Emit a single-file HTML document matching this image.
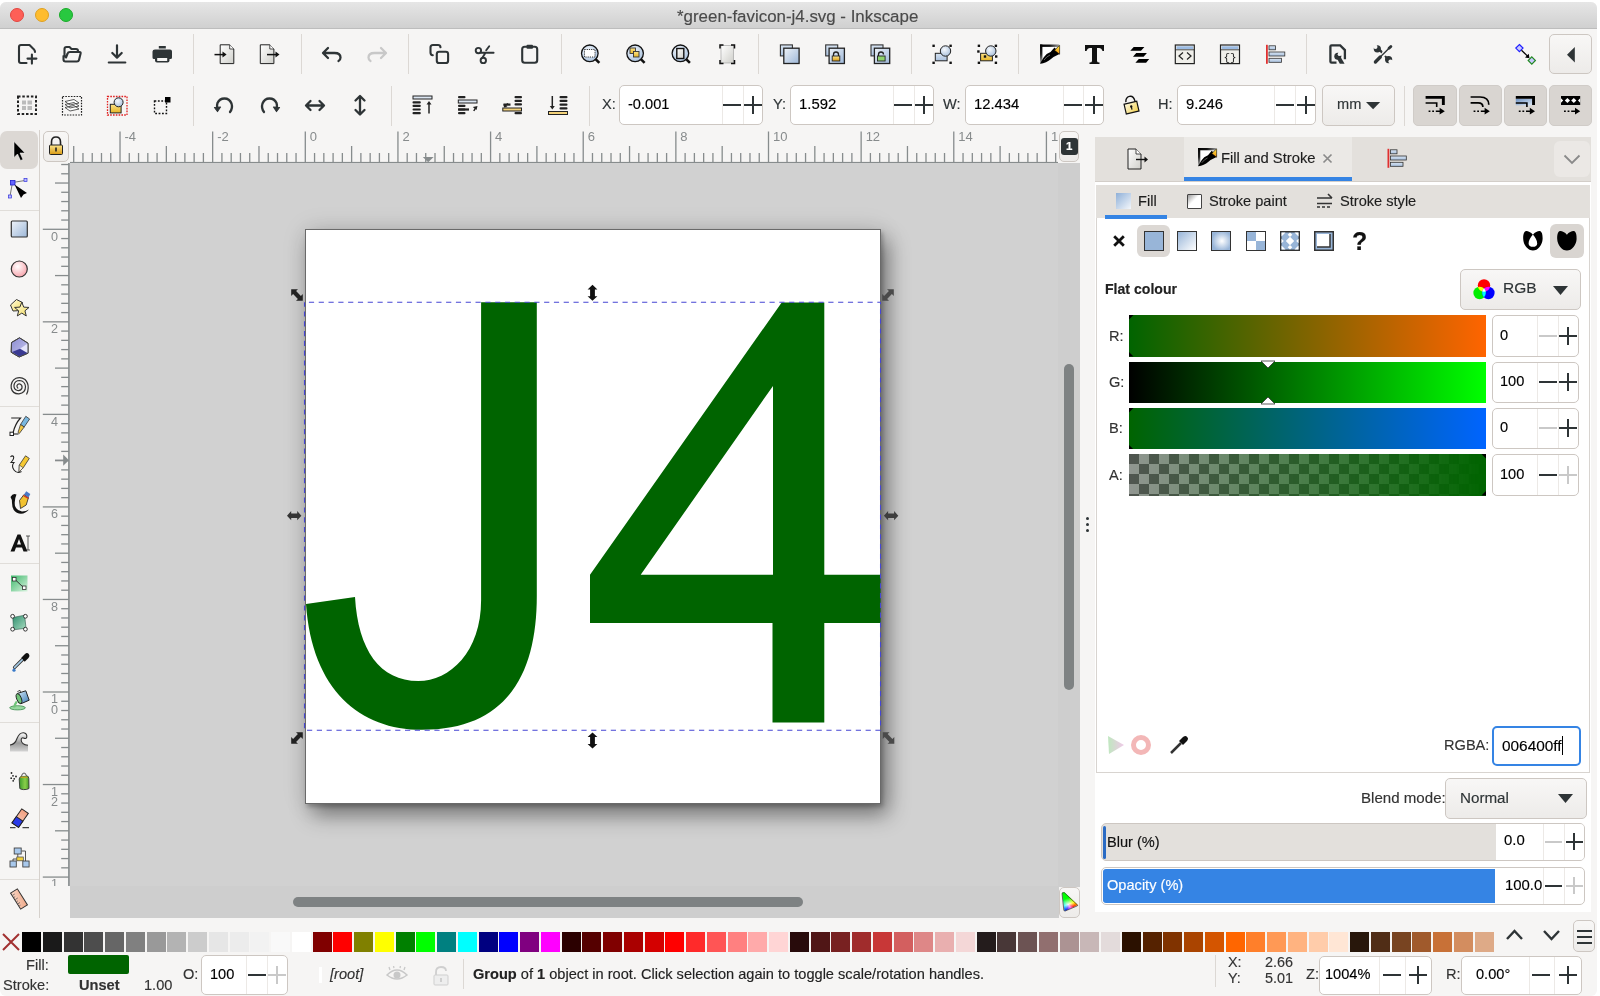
<!DOCTYPE html><html><head><meta charset="utf-8"><style>
html,body{margin:0;padding:0;width:1600px;height:996px;overflow:hidden;background:#fff;font-family:"Liberation Sans",sans-serif;}
.t{will-change:transform;-webkit-text-stroke:0.15px}
#win{position:absolute;left:0;top:2px;width:1597px;height:994px;background:#f6f5f4;overflow:hidden;border-radius:6px;}
</style></head><body>
<div id="win"></div>
<div style="position:absolute;left:0px;top:2px;width:1597px;height:26.6px;background:linear-gradient(#e6e6e6,#d0d0d0);border-bottom:1.2px solid #bdbdbd;box-sizing:border-box;border-radius:6px 6px 0 0"></div>
<div style="position:absolute;left:10px;top:8px;width:14px;height:14px;background:#fe5f57;border-radius:50%;box-sizing:border-box;border:0.5px solid #e24640"></div>
<div style="position:absolute;left:34.5px;top:8px;width:14px;height:14px;background:#febc2e;border-radius:50%;box-sizing:border-box;border:0.5px solid #dea123"></div>
<div style="position:absolute;left:59px;top:8px;width:14px;height:14px;background:#28c840;border-radius:50%;box-sizing:border-box;border:0.5px solid #1aab29"></div>
<div class="t" style="position:absolute;left:676.5px;top:8.6px;font-size:16.9px;line-height:1;color:#4a4a4a;font-weight:400;white-space:pre;">*green-favicon-j4.svg - Inkscape</div>
<div style="position:absolute;left:193px;top:34px;width:1px;height:40px;background:#dcd8d4"></div>
<div style="position:absolute;left:300.5px;top:34px;width:1px;height:40px;background:#dcd8d4"></div>
<div style="position:absolute;left:408px;top:34px;width:1px;height:40px;background:#dcd8d4"></div>
<div style="position:absolute;left:560.5px;top:34px;width:1px;height:40px;background:#dcd8d4"></div>
<div style="position:absolute;left:758.2px;top:34px;width:1px;height:40px;background:#dcd8d4"></div>
<div style="position:absolute;left:910.9px;top:34px;width:1px;height:40px;background:#dcd8d4"></div>
<div style="position:absolute;left:1018.4px;top:34px;width:1px;height:40px;background:#dcd8d4"></div>
<div style="position:absolute;left:1306px;top:34px;width:1px;height:40px;background:#dcd8d4"></div>
<div style="position:absolute;left:193px;top:86px;width:1px;height:40px;background:#dcd8d4"></div>
<div style="position:absolute;left:391px;top:86px;width:1px;height:40px;background:#dcd8d4"></div>
<div style="position:absolute;left:588.5px;top:86px;width:1px;height:40px;background:#dcd8d4"></div>
<div style="position:absolute;left:1403.8px;top:86px;width:1px;height:40px;background:#dcd8d4"></div>
<div style="position:absolute;left:619.4px;top:85.2px;width:143.7px;height:39.7px;background:#fff;border:1px solid #cdc7c2;border-radius:5px;box-sizing:border-box"></div>
<div style="position:absolute;left:721.9px;top:86.2px;width:1px;height:37.7px;background:#ece9e6"></div>
<div style="position:absolute;left:742.8px;top:86.2px;width:1px;height:37.7px;background:#ece9e6"></div>
<div class="t" style="position:absolute;left:627.5px;top:96.89110000000001px;font-size:14.6px;line-height:1;color:#000;font-weight:400;white-space:pre;">-0.001</div>
<div style="position:absolute;left:723.3499999999999px;top:104.05000000000001px;width:18px;height:2px;background:#2e3436"></div>
<div style="position:absolute;left:743.9499999999999px;top:104.05000000000001px;width:18px;height:2px;background:#2e3436"></div>
<div style="position:absolute;left:751.9499999999999px;top:96.05000000000001px;width:2px;height:18px;background:#2e3436"></div>
<div style="position:absolute;left:790.3px;top:85.2px;width:143.7px;height:39.7px;background:#fff;border:1px solid #cdc7c2;border-radius:5px;box-sizing:border-box"></div>
<div style="position:absolute;left:892.8px;top:86.2px;width:1px;height:37.7px;background:#ece9e6"></div>
<div style="position:absolute;left:913.75px;top:86.2px;width:1px;height:37.7px;background:#ece9e6"></div>
<div class="t" style="position:absolute;left:798.8px;top:96.63715000000002px;font-size:14.9px;line-height:1;color:#000;font-weight:400;white-space:pre;">1.592</div>
<div style="position:absolute;left:894.275px;top:104.05000000000001px;width:18px;height:2px;background:#2e3436"></div>
<div style="position:absolute;left:914.875px;top:104.05000000000001px;width:18px;height:2px;background:#2e3436"></div>
<div style="position:absolute;left:922.875px;top:96.05000000000001px;width:2px;height:18px;background:#2e3436"></div>
<div style="position:absolute;left:965px;top:85.2px;width:139px;height:39.7px;background:#fff;border:1px solid #cdc7c2;border-radius:5px;box-sizing:border-box"></div>
<div style="position:absolute;left:1062.5px;top:86.2px;width:1px;height:37.7px;background:#ece9e6"></div>
<div style="position:absolute;left:1083px;top:86.2px;width:1px;height:37.7px;background:#ece9e6"></div>
<div class="t" style="position:absolute;left:973.5px;top:96.72180000000002px;font-size:14.8px;line-height:1;color:#000;font-weight:400;white-space:pre;">12.434</div>
<div style="position:absolute;left:1063.75px;top:104.05000000000001px;width:18px;height:2px;background:#2e3436"></div>
<div style="position:absolute;left:1084.5px;top:104.05000000000001px;width:18px;height:2px;background:#2e3436"></div>
<div style="position:absolute;left:1092.5px;top:96.05000000000001px;width:2px;height:18px;background:#2e3436"></div>
<div style="position:absolute;left:1176.7px;top:85.2px;width:139.3px;height:39.7px;background:#fff;border:1px solid #cdc7c2;border-radius:5px;box-sizing:border-box"></div>
<div style="position:absolute;left:1274.4px;top:86.2px;width:1px;height:37.7px;background:#ece9e6"></div>
<div style="position:absolute;left:1295.3px;top:86.2px;width:1px;height:37.7px;background:#ece9e6"></div>
<div class="t" style="position:absolute;left:1186px;top:96.72180000000002px;font-size:14.8px;line-height:1;color:#000;font-weight:400;white-space:pre;">9.246</div>
<div style="position:absolute;left:1275.85px;top:104.05000000000001px;width:18px;height:2px;background:#2e3436"></div>
<div style="position:absolute;left:1296.65px;top:104.05000000000001px;width:18px;height:2px;background:#2e3436"></div>
<div style="position:absolute;left:1304.65px;top:96.05000000000001px;width:2px;height:18px;background:#2e3436"></div>
<div class="t" style="position:absolute;left:602px;top:97px;font-size:14.6px;line-height:1;color:#2e3436;font-weight:400;white-space:pre;">X:</div>
<div class="t" style="position:absolute;left:772.5px;top:97px;font-size:14.6px;line-height:1;color:#2e3436;font-weight:400;white-space:pre;">Y:</div>
<div class="t" style="position:absolute;left:943px;top:97px;font-size:14.6px;line-height:1;color:#2e3436;font-weight:400;white-space:pre;">W:</div>
<div class="t" style="position:absolute;left:1158px;top:97px;font-size:14.6px;line-height:1;color:#2e3436;font-weight:400;white-space:pre;">H:</div>
<div style="position:absolute;left:1322.3px;top:85px;width:72.5px;height:40.6px;background:linear-gradient(#f8f7f6,#edebe9);border:1px solid #cdc7c2;border-radius:5px;box-sizing:border-box"></div>
<div class="t" style="position:absolute;left:1336.5px;top:97.2px;font-size:14.6px;line-height:1;color:#2e3436;font-weight:400;white-space:pre;">mm</div>
<svg style="position:absolute;left:1365.8px;top:101.8px" width="15" height="10" viewBox="0 0 15 10"><path d="M0 0H14.2L7.1 7.3Z" fill="#2e3436"/></svg>
<div style="position:absolute;left:1413.25px;top:85px;width:43.5px;height:40.5px;background:#d9d5d1;border:1px solid #d0ccc8;border-radius:5px;box-sizing:border-box"></div>
<div style="position:absolute;left:1458.75px;top:85px;width:43.0px;height:40.5px;background:#d9d5d1;border:1px solid #d0ccc8;border-radius:5px;box-sizing:border-box"></div>
<div style="position:absolute;left:1504.25px;top:85px;width:42.5px;height:40.5px;background:#d9d5d1;border:1px solid #d0ccc8;border-radius:5px;box-sizing:border-box"></div>
<div style="position:absolute;left:1549.25px;top:85px;width:42.75px;height:40.5px;background:#d9d5d1;border:1px solid #d0ccc8;border-radius:5px;box-sizing:border-box"></div>
<div style="position:absolute;left:1549.25px;top:33.75px;width:42.5px;height:40.5px;background:linear-gradient(#f8f7f6,#edebe9);border:1px solid #cdc7c2;border-radius:5px;box-sizing:border-box"></div>
<svg style="position:absolute;left:1567px;top:46.5px" width="9" height="16" viewBox="0 0 9 16"><path d="M7.8 0V15.5L0 7.75Z" fill="#2e3436"/></svg>
<div style="position:absolute;left:39px;top:130px;width:1px;height:788px;background:#d6d1cc"></div>
<div style="position:absolute;left:0px;top:131px;width:38.2px;height:38.2px;background:#dcd8d4;border-radius:7px"></div>
<div style="position:absolute;left:0px;top:209.8px;width:39px;height:1px;background:#e0ddd9"></div>
<div style="position:absolute;left:0px;top:406px;width:39px;height:1px;background:#e0ddd9"></div>
<div style="position:absolute;left:0px;top:563.4px;width:39px;height:1px;background:#e0ddd9"></div>
<div style="position:absolute;left:0px;top:721.6px;width:39px;height:1px;background:#e0ddd9"></div>
<div style="position:absolute;left:0px;top:878.5px;width:39px;height:1px;background:#e0ddd9"></div>
<div style="position:absolute;left:70px;top:130px;width:988px;height:32px;background:#f6f5f4"></div>
<div style="position:absolute;left:70px;top:163px;width:1010px;height:723px;background:#d1d1d1"></div>
<div style="position:absolute;left:70px;top:886px;width:1010px;height:32px;background:#cecece"></div>
<div style="position:absolute;left:1058px;top:163px;width:22px;height:723px;background:#cecece"></div>
<div style="position:absolute;left:1059px;top:887px;width:21px;height:31px;background:#f6f5f4"></div>
<svg style="position:absolute;left:70px;top:130px;will-change:transform" width="988" height="33" viewBox="0 0 988 33"><rect x="0" y="31.9" width="988" height="1.2" fill="#878c8d"/><rect x="3.05" y="16" width="1.3" height="16.5" fill="#878c8d"/><rect x="12.31" y="23" width="1.3" height="9.5" fill="#878c8d"/><rect x="21.58" y="23" width="1.3" height="9.5" fill="#878c8d"/><rect x="30.84" y="23" width="1.3" height="9.5" fill="#878c8d"/><rect x="40.11" y="23" width="1.3" height="9.5" fill="#878c8d"/><rect x="49.37" y="1.5" width="1.3" height="31.0" fill="#878c8d"/><text x="54.52" y="11.1" font-size="13" fill="#878b8c" font-family="Liberation Sans">-4</text><rect x="58.63" y="23" width="1.3" height="9.5" fill="#878c8d"/><rect x="67.90" y="23" width="1.3" height="9.5" fill="#878c8d"/><rect x="77.16" y="23" width="1.3" height="9.5" fill="#878c8d"/><rect x="86.43" y="23" width="1.3" height="9.5" fill="#878c8d"/><rect x="95.69" y="16" width="1.3" height="16.5" fill="#878c8d"/><rect x="104.95" y="23" width="1.3" height="9.5" fill="#878c8d"/><rect x="114.22" y="23" width="1.3" height="9.5" fill="#878c8d"/><rect x="123.48" y="23" width="1.3" height="9.5" fill="#878c8d"/><rect x="132.75" y="23" width="1.3" height="9.5" fill="#878c8d"/><rect x="142.01" y="1.5" width="1.3" height="31.0" fill="#878c8d"/><text x="147.16" y="11.1" font-size="13" fill="#878b8c" font-family="Liberation Sans">-2</text><rect x="151.27" y="23" width="1.3" height="9.5" fill="#878c8d"/><rect x="160.54" y="23" width="1.3" height="9.5" fill="#878c8d"/><rect x="169.80" y="23" width="1.3" height="9.5" fill="#878c8d"/><rect x="179.07" y="23" width="1.3" height="9.5" fill="#878c8d"/><rect x="188.33" y="16" width="1.3" height="16.5" fill="#878c8d"/><rect x="197.59" y="23" width="1.3" height="9.5" fill="#878c8d"/><rect x="206.86" y="23" width="1.3" height="9.5" fill="#878c8d"/><rect x="216.12" y="23" width="1.3" height="9.5" fill="#878c8d"/><rect x="225.39" y="23" width="1.3" height="9.5" fill="#878c8d"/><rect x="234.65" y="1.5" width="1.3" height="31.0" fill="#878c8d"/><text x="239.80" y="11.1" font-size="13" fill="#878b8c" font-family="Liberation Sans">0</text><rect x="243.91" y="23" width="1.3" height="9.5" fill="#878c8d"/><rect x="253.18" y="23" width="1.3" height="9.5" fill="#878c8d"/><rect x="262.44" y="23" width="1.3" height="9.5" fill="#878c8d"/><rect x="271.71" y="23" width="1.3" height="9.5" fill="#878c8d"/><rect x="280.97" y="16" width="1.3" height="16.5" fill="#878c8d"/><rect x="290.23" y="23" width="1.3" height="9.5" fill="#878c8d"/><rect x="299.50" y="23" width="1.3" height="9.5" fill="#878c8d"/><rect x="308.76" y="23" width="1.3" height="9.5" fill="#878c8d"/><rect x="318.03" y="23" width="1.3" height="9.5" fill="#878c8d"/><rect x="327.29" y="1.5" width="1.3" height="31.0" fill="#878c8d"/><text x="332.44" y="11.1" font-size="13" fill="#878b8c" font-family="Liberation Sans">2</text><rect x="336.55" y="23" width="1.3" height="9.5" fill="#878c8d"/><rect x="345.82" y="23" width="1.3" height="9.5" fill="#878c8d"/><rect x="355.08" y="23" width="1.3" height="9.5" fill="#878c8d"/><rect x="364.35" y="23" width="1.3" height="9.5" fill="#878c8d"/><rect x="373.61" y="16" width="1.3" height="16.5" fill="#878c8d"/><rect x="382.87" y="23" width="1.3" height="9.5" fill="#878c8d"/><rect x="392.14" y="23" width="1.3" height="9.5" fill="#878c8d"/><rect x="401.40" y="23" width="1.3" height="9.5" fill="#878c8d"/><rect x="410.67" y="23" width="1.3" height="9.5" fill="#878c8d"/><rect x="419.93" y="1.5" width="1.3" height="31.0" fill="#878c8d"/><text x="425.08" y="11.1" font-size="13" fill="#878b8c" font-family="Liberation Sans">4</text><rect x="429.19" y="23" width="1.3" height="9.5" fill="#878c8d"/><rect x="438.46" y="23" width="1.3" height="9.5" fill="#878c8d"/><rect x="447.72" y="23" width="1.3" height="9.5" fill="#878c8d"/><rect x="456.99" y="23" width="1.3" height="9.5" fill="#878c8d"/><rect x="466.25" y="16" width="1.3" height="16.5" fill="#878c8d"/><rect x="475.51" y="23" width="1.3" height="9.5" fill="#878c8d"/><rect x="484.78" y="23" width="1.3" height="9.5" fill="#878c8d"/><rect x="494.04" y="23" width="1.3" height="9.5" fill="#878c8d"/><rect x="503.31" y="23" width="1.3" height="9.5" fill="#878c8d"/><rect x="512.57" y="1.5" width="1.3" height="31.0" fill="#878c8d"/><text x="517.72" y="11.1" font-size="13" fill="#878b8c" font-family="Liberation Sans">6</text><rect x="521.83" y="23" width="1.3" height="9.5" fill="#878c8d"/><rect x="531.10" y="23" width="1.3" height="9.5" fill="#878c8d"/><rect x="540.36" y="23" width="1.3" height="9.5" fill="#878c8d"/><rect x="549.63" y="23" width="1.3" height="9.5" fill="#878c8d"/><rect x="558.89" y="16" width="1.3" height="16.5" fill="#878c8d"/><rect x="568.15" y="23" width="1.3" height="9.5" fill="#878c8d"/><rect x="577.42" y="23" width="1.3" height="9.5" fill="#878c8d"/><rect x="586.68" y="23" width="1.3" height="9.5" fill="#878c8d"/><rect x="595.95" y="23" width="1.3" height="9.5" fill="#878c8d"/><rect x="605.21" y="1.5" width="1.3" height="31.0" fill="#878c8d"/><text x="610.36" y="11.1" font-size="13" fill="#878b8c" font-family="Liberation Sans">8</text><rect x="614.47" y="23" width="1.3" height="9.5" fill="#878c8d"/><rect x="623.74" y="23" width="1.3" height="9.5" fill="#878c8d"/><rect x="633.00" y="23" width="1.3" height="9.5" fill="#878c8d"/><rect x="642.27" y="23" width="1.3" height="9.5" fill="#878c8d"/><rect x="651.53" y="16" width="1.3" height="16.5" fill="#878c8d"/><rect x="660.79" y="23" width="1.3" height="9.5" fill="#878c8d"/><rect x="670.06" y="23" width="1.3" height="9.5" fill="#878c8d"/><rect x="679.32" y="23" width="1.3" height="9.5" fill="#878c8d"/><rect x="688.59" y="23" width="1.3" height="9.5" fill="#878c8d"/><rect x="697.85" y="1.5" width="1.3" height="31.0" fill="#878c8d"/><text x="703.00" y="11.1" font-size="13" fill="#878b8c" font-family="Liberation Sans">10</text><rect x="707.11" y="23" width="1.3" height="9.5" fill="#878c8d"/><rect x="716.38" y="23" width="1.3" height="9.5" fill="#878c8d"/><rect x="725.64" y="23" width="1.3" height="9.5" fill="#878c8d"/><rect x="734.91" y="23" width="1.3" height="9.5" fill="#878c8d"/><rect x="744.17" y="16" width="1.3" height="16.5" fill="#878c8d"/><rect x="753.43" y="23" width="1.3" height="9.5" fill="#878c8d"/><rect x="762.70" y="23" width="1.3" height="9.5" fill="#878c8d"/><rect x="771.96" y="23" width="1.3" height="9.5" fill="#878c8d"/><rect x="781.23" y="23" width="1.3" height="9.5" fill="#878c8d"/><rect x="790.49" y="1.5" width="1.3" height="31.0" fill="#878c8d"/><text x="795.64" y="11.1" font-size="13" fill="#878b8c" font-family="Liberation Sans">12</text><rect x="799.75" y="23" width="1.3" height="9.5" fill="#878c8d"/><rect x="809.02" y="23" width="1.3" height="9.5" fill="#878c8d"/><rect x="818.28" y="23" width="1.3" height="9.5" fill="#878c8d"/><rect x="827.55" y="23" width="1.3" height="9.5" fill="#878c8d"/><rect x="836.81" y="16" width="1.3" height="16.5" fill="#878c8d"/><rect x="846.07" y="23" width="1.3" height="9.5" fill="#878c8d"/><rect x="855.34" y="23" width="1.3" height="9.5" fill="#878c8d"/><rect x="864.60" y="23" width="1.3" height="9.5" fill="#878c8d"/><rect x="873.87" y="23" width="1.3" height="9.5" fill="#878c8d"/><rect x="883.13" y="1.5" width="1.3" height="31.0" fill="#878c8d"/><text x="888.28" y="11.1" font-size="13" fill="#878b8c" font-family="Liberation Sans">14</text><rect x="892.39" y="23" width="1.3" height="9.5" fill="#878c8d"/><rect x="901.66" y="23" width="1.3" height="9.5" fill="#878c8d"/><rect x="910.92" y="23" width="1.3" height="9.5" fill="#878c8d"/><rect x="920.19" y="23" width="1.3" height="9.5" fill="#878c8d"/><rect x="929.45" y="16" width="1.3" height="16.5" fill="#878c8d"/><rect x="938.71" y="23" width="1.3" height="9.5" fill="#878c8d"/><rect x="947.98" y="23" width="1.3" height="9.5" fill="#878c8d"/><rect x="957.24" y="23" width="1.3" height="9.5" fill="#878c8d"/><rect x="966.51" y="23" width="1.3" height="9.5" fill="#878c8d"/><rect x="975.77" y="1.5" width="1.3" height="31.0" fill="#878c8d"/><text x="980.92" y="11.1" font-size="13" fill="#878b8c" font-family="Liberation Sans">16</text><rect x="985.03" y="23" width="1.3" height="9.5" fill="#878c8d"/></svg>
<svg style="position:absolute;left:40px;top:163px;will-change:transform" width="30" height="723" viewBox="0 0 30 723"><rect x="28.1" y="0" width="1.7" height="723" fill="#878c8d"/><rect x="21.2" y="0.87" width="7.800000000000001" height="1.3" fill="#878c8d"/><rect x="21.2" y="10.13" width="7.800000000000001" height="1.3" fill="#878c8d"/><rect x="15" y="19.38" width="14" height="1.3" fill="#878c8d"/><rect x="21.2" y="28.63" width="7.800000000000001" height="1.3" fill="#878c8d"/><rect x="21.2" y="37.89" width="7.800000000000001" height="1.3" fill="#878c8d"/><rect x="21.2" y="47.14" width="7.800000000000001" height="1.3" fill="#878c8d"/><rect x="21.2" y="56.40" width="7.800000000000001" height="1.3" fill="#878c8d"/><rect x="2.8" y="65.65" width="26.2" height="1.3" fill="#878c8d"/><text x="14.6" y="77.60" font-size="12.6" fill="#878b8c" font-family="Liberation Sans" text-anchor="middle">0</text><rect x="21.2" y="74.90" width="7.800000000000001" height="1.3" fill="#878c8d"/><rect x="21.2" y="84.16" width="7.800000000000001" height="1.3" fill="#878c8d"/><rect x="21.2" y="93.41" width="7.800000000000001" height="1.3" fill="#878c8d"/><rect x="21.2" y="102.67" width="7.800000000000001" height="1.3" fill="#878c8d"/><rect x="15" y="111.92" width="14" height="1.3" fill="#878c8d"/><rect x="21.2" y="121.17" width="7.800000000000001" height="1.3" fill="#878c8d"/><rect x="21.2" y="130.43" width="7.800000000000001" height="1.3" fill="#878c8d"/><rect x="21.2" y="139.68" width="7.800000000000001" height="1.3" fill="#878c8d"/><rect x="21.2" y="148.94" width="7.800000000000001" height="1.3" fill="#878c8d"/><rect x="2.8" y="158.19" width="26.2" height="1.3" fill="#878c8d"/><text x="14.6" y="170.14" font-size="12.6" fill="#878b8c" font-family="Liberation Sans" text-anchor="middle">2</text><rect x="21.2" y="167.44" width="7.800000000000001" height="1.3" fill="#878c8d"/><rect x="21.2" y="176.70" width="7.800000000000001" height="1.3" fill="#878c8d"/><rect x="21.2" y="185.95" width="7.800000000000001" height="1.3" fill="#878c8d"/><rect x="21.2" y="195.21" width="7.800000000000001" height="1.3" fill="#878c8d"/><rect x="15" y="204.46" width="14" height="1.3" fill="#878c8d"/><rect x="21.2" y="213.71" width="7.800000000000001" height="1.3" fill="#878c8d"/><rect x="21.2" y="222.97" width="7.800000000000001" height="1.3" fill="#878c8d"/><rect x="21.2" y="232.22" width="7.800000000000001" height="1.3" fill="#878c8d"/><rect x="21.2" y="241.48" width="7.800000000000001" height="1.3" fill="#878c8d"/><rect x="2.8" y="250.73" width="26.2" height="1.3" fill="#878c8d"/><text x="14.6" y="262.68" font-size="12.6" fill="#878b8c" font-family="Liberation Sans" text-anchor="middle">4</text><rect x="21.2" y="259.98" width="7.800000000000001" height="1.3" fill="#878c8d"/><rect x="21.2" y="269.24" width="7.800000000000001" height="1.3" fill="#878c8d"/><rect x="21.2" y="278.49" width="7.800000000000001" height="1.3" fill="#878c8d"/><rect x="21.2" y="287.75" width="7.800000000000001" height="1.3" fill="#878c8d"/><rect x="15" y="297.00" width="14" height="1.3" fill="#878c8d"/><rect x="21.2" y="306.25" width="7.800000000000001" height="1.3" fill="#878c8d"/><rect x="21.2" y="315.51" width="7.800000000000001" height="1.3" fill="#878c8d"/><rect x="21.2" y="324.76" width="7.800000000000001" height="1.3" fill="#878c8d"/><rect x="21.2" y="334.02" width="7.800000000000001" height="1.3" fill="#878c8d"/><rect x="2.8" y="343.27" width="26.2" height="1.3" fill="#878c8d"/><text x="14.6" y="355.22" font-size="12.6" fill="#878b8c" font-family="Liberation Sans" text-anchor="middle">6</text><rect x="21.2" y="352.52" width="7.800000000000001" height="1.3" fill="#878c8d"/><rect x="21.2" y="361.78" width="7.800000000000001" height="1.3" fill="#878c8d"/><rect x="21.2" y="371.03" width="7.800000000000001" height="1.3" fill="#878c8d"/><rect x="21.2" y="380.29" width="7.800000000000001" height="1.3" fill="#878c8d"/><rect x="15" y="389.54" width="14" height="1.3" fill="#878c8d"/><rect x="21.2" y="398.79" width="7.800000000000001" height="1.3" fill="#878c8d"/><rect x="21.2" y="408.05" width="7.800000000000001" height="1.3" fill="#878c8d"/><rect x="21.2" y="417.30" width="7.800000000000001" height="1.3" fill="#878c8d"/><rect x="21.2" y="426.56" width="7.800000000000001" height="1.3" fill="#878c8d"/><rect x="2.8" y="435.81" width="26.2" height="1.3" fill="#878c8d"/><text x="14.6" y="447.76" font-size="12.6" fill="#878b8c" font-family="Liberation Sans" text-anchor="middle">8</text><rect x="21.2" y="445.06" width="7.800000000000001" height="1.3" fill="#878c8d"/><rect x="21.2" y="454.32" width="7.800000000000001" height="1.3" fill="#878c8d"/><rect x="21.2" y="463.57" width="7.800000000000001" height="1.3" fill="#878c8d"/><rect x="21.2" y="472.83" width="7.800000000000001" height="1.3" fill="#878c8d"/><rect x="15" y="482.08" width="14" height="1.3" fill="#878c8d"/><rect x="21.2" y="491.33" width="7.800000000000001" height="1.3" fill="#878c8d"/><rect x="21.2" y="500.59" width="7.800000000000001" height="1.3" fill="#878c8d"/><rect x="21.2" y="509.84" width="7.800000000000001" height="1.3" fill="#878c8d"/><rect x="21.2" y="519.10" width="7.800000000000001" height="1.3" fill="#878c8d"/><rect x="2.8" y="528.35" width="26.2" height="1.3" fill="#878c8d"/><text x="14.6" y="540.30" font-size="12.6" fill="#878b8c" font-family="Liberation Sans" text-anchor="middle">1</text><text x="14.6" y="550.90" font-size="12.6" fill="#878b8c" font-family="Liberation Sans" text-anchor="middle">0</text><rect x="21.2" y="537.60" width="7.800000000000001" height="1.3" fill="#878c8d"/><rect x="21.2" y="546.86" width="7.800000000000001" height="1.3" fill="#878c8d"/><rect x="21.2" y="556.11" width="7.800000000000001" height="1.3" fill="#878c8d"/><rect x="21.2" y="565.37" width="7.800000000000001" height="1.3" fill="#878c8d"/><rect x="15" y="574.62" width="14" height="1.3" fill="#878c8d"/><rect x="21.2" y="583.87" width="7.800000000000001" height="1.3" fill="#878c8d"/><rect x="21.2" y="593.13" width="7.800000000000001" height="1.3" fill="#878c8d"/><rect x="21.2" y="602.38" width="7.800000000000001" height="1.3" fill="#878c8d"/><rect x="21.2" y="611.64" width="7.800000000000001" height="1.3" fill="#878c8d"/><rect x="2.8" y="620.89" width="26.2" height="1.3" fill="#878c8d"/><text x="14.6" y="632.84" font-size="12.6" fill="#878b8c" font-family="Liberation Sans" text-anchor="middle">1</text><text x="14.6" y="643.44" font-size="12.6" fill="#878b8c" font-family="Liberation Sans" text-anchor="middle">2</text><rect x="21.2" y="630.14" width="7.800000000000001" height="1.3" fill="#878c8d"/><rect x="21.2" y="639.40" width="7.800000000000001" height="1.3" fill="#878c8d"/><rect x="21.2" y="648.65" width="7.800000000000001" height="1.3" fill="#878c8d"/><rect x="21.2" y="657.91" width="7.800000000000001" height="1.3" fill="#878c8d"/><rect x="15" y="667.16" width="14" height="1.3" fill="#878c8d"/><rect x="21.2" y="676.41" width="7.800000000000001" height="1.3" fill="#878c8d"/><rect x="21.2" y="685.67" width="7.800000000000001" height="1.3" fill="#878c8d"/><rect x="21.2" y="694.92" width="7.800000000000001" height="1.3" fill="#878c8d"/><rect x="21.2" y="704.18" width="7.800000000000001" height="1.3" fill="#878c8d"/><rect x="2.8" y="713.43" width="26.2" height="1.3" fill="#878c8d"/><text x="14.6" y="725.38" font-size="12.6" fill="#878b8c" font-family="Liberation Sans" text-anchor="middle">1</text><text x="14.6" y="735.98" font-size="12.6" fill="#878b8c" font-family="Liberation Sans" text-anchor="middle">4</text></svg>
<div style="position:absolute;left:43.2px;top:131px;width:25.7px;height:31.2px;background:linear-gradient(#f8f7f6,#edebe9);border:1px solid #cdc7c2;border-radius:5px;box-sizing:border-box"></div>
<div style="position:absolute;left:1058.75px;top:131px;width:20.5px;height:31px;background:linear-gradient(#f8f7f6,#edebe9);border:1px solid #cdc7c2;border-radius:5px;box-sizing:border-box"></div>
<div style="position:absolute;left:1061px;top:138px;width:16.5px;height:17px;background:#2e3436;border-radius:3px"></div>
<div class="t" style="position:absolute;left:1065.5px;top:141px;font-size:11.5px;line-height:1;color:#fff;font-weight:700;white-space:pre;">1</div>
<div style="position:absolute;left:305.2px;top:229px;width:576px;height:575px;background:#fff;border:1.3px solid #6a6a6a;box-sizing:border-box;box-shadow:7px 11px 20px rgba(0,0,0,0.42), 2px 3px 4px rgba(0,0,0,0.22), 0 0 24px rgba(0,0,0,0.10)"></div>
<svg style="position:absolute;left:0px;top:0px" width="1600" height="996" viewBox="0 0 1600 996"><path d="M481.1 302.2H536.8V596C536.8 670 510 729.8 422 729.8C360 729.8 312 690 306 603.9L355 597C358 650 380 681 418.3 681C450 681 481.1 652 481.1 600Z" fill="#006400"/><path d="M590 574.8L781.7 302.4H824.3V574.8H880.5V623H824.3V722.5H772.5V623H590ZM640.7 574.8L773 385.9V574.8Z" fill="#006400" fill-rule="evenodd"/><rect x="304.5" y="302.2" width="576" height="428.1" fill="none" stroke="#4646d4" stroke-width="1.05" stroke-dasharray="5.2 4.6" stroke-dashoffset="-4.4"/></svg>
<div style="position:absolute;left:1064px;top:363.7px;width:10.3px;height:326.3px;background:#7e8283;border-radius:5px"></div>
<div style="position:absolute;left:293px;top:897.1px;width:510px;height:9.8px;background:#7e8283;border-radius:5px"></div>
<div style="position:absolute;left:1059.3px;top:887px;width:20.5px;height:31px;background:linear-gradient(#f8f7f6,#edebe9);border:1px solid #cdc7c2;border-radius:5px;box-sizing:border-box"></div>
<div style="position:absolute;left:1061.5px;top:892.3px;width:16.5px;height:19px;background:radial-gradient(circle at 40% 65%,rgba(255,255,255,.95),rgba(255,255,255,0) 40%),conic-gradient(from 0deg at 40% 65%,#0f0,#ff0 70deg,#f00 115deg,#f0f 150deg,#00f 195deg,#0ff 250deg,#0f0 330deg);clip-path:polygon(3% 3%,18% 0%,100% 67%,18% 100%)"></div>
<svg style="position:absolute;left:1061px;top:892px" width="18" height="20" viewBox="0 0 18 20"><path d="M1 1.3Q2 0 3.5 0.8L16.5 13Q17 13.7 16 14L4.2 19Q3 19.3 2.8 18Z" fill="none" stroke="#333" stroke-width="0.7"/></svg>
<div style="position:absolute;left:1085.5px;top:517px;width:3px;height:3px;background:#2e3436;border-radius:50%"></div>
<div style="position:absolute;left:1085.5px;top:523px;width:3px;height:3px;background:#2e3436;border-radius:50%"></div>
<div style="position:absolute;left:1085.5px;top:529px;width:3px;height:3px;background:#2e3436;border-radius:50%"></div>
<div style="position:absolute;left:1094.6px;top:137.1px;width:496.6px;height:44.2px;background:#e3e0dc"></div>
<div style="position:absolute;left:1184px;top:137.1px;width:168.3px;height:44.2px;background:#ebe9e6"></div>
<div style="position:absolute;left:1184px;top:177.4px;width:168.3px;height:3.9px;background:#3584e4"></div>
<div style="position:absolute;left:1094.6px;top:181px;width:496.6px;height:1.2px;background:#d3cec9"></div>
<div style="position:absolute;left:1554px;top:141px;width:36px;height:36px;background:#ebe8e5;border-radius:6px"></div>
<svg style="position:absolute;left:1563px;top:154px" width="18" height="12" viewBox="0 0 18 12"><path d="M1.5 1.5L9 9L16.5 1.5" fill="none" stroke="#8a8a8a" stroke-width="1.8"/></svg>
<div class="t" style="position:absolute;left:1220.5px;top:150.5px;font-size:14.8px;line-height:1;color:#1e1e1e;font-weight:400;white-space:pre;">Fill and Stroke</div>
<svg style="position:absolute;left:1322px;top:153px" width="11" height="11" viewBox="0 0 11 11"><path d="M1.5 1.5L9.5 9.5M9.5 1.5L1.5 9.5" stroke="#8a8a8a" stroke-width="1.7"/></svg>
<div style="position:absolute;left:1095px;top:182px;width:496px;height:729.6px;background:#fff"></div>
<div style="position:absolute;left:1096.2px;top:185.2px;width:493.4px;height:588px;background:#fff;border:1px solid #d8d4d0;box-sizing:border-box"></div>
<div style="position:absolute;left:1096.2px;top:185.2px;width:493.4px;height:33.2px;background:#e3e0dc"></div>
<div style="position:absolute;left:1105.3px;top:215.3px;width:61.5px;height:4.2px;background:#3584e4"></div>
<div class="t" style="position:absolute;left:1138px;top:194px;font-size:14.6px;line-height:1;color:#1e1e1e;font-weight:400;white-space:pre;">Fill</div>
<div class="t" style="position:absolute;left:1209px;top:194px;font-size:14.6px;line-height:1;color:#1e1e1e;font-weight:400;white-space:pre;">Stroke paint</div>
<div class="t" style="position:absolute;left:1340px;top:194px;font-size:14.6px;line-height:1;color:#1e1e1e;font-weight:400;white-space:pre;">Stroke style</div>
<div style="position:absolute;left:1187.2px;top:194.2px;width:15.3px;height:15.1px;border:1.3px solid #444;box-sizing:border-box;border-radius:1px;background:linear-gradient(135deg,#9a9a9a,#fff 45%)"></div>
<div style="position:absolute;left:1116px;top:193px;width:15px;height:16px;background:linear-gradient(135deg,#8fb0d8,#f4f7fb)"></div>
<svg style="position:absolute;left:1317px;top:193px" width="17" height="16" viewBox="0 0 17 16"><path d="M0 5H15M11 1L15 5M0 10.5H15" stroke="#333" stroke-width="1.6" fill="none"/><path d="M0 14H3M5 14H8M10 14H13" stroke="#333" stroke-width="1.4"/></svg>
<svg style="position:absolute;left:1112px;top:234px" width="14" height="14" viewBox="0 0 14 14"><path d="M2.2 2.2L11.8 11.8M11.8 2.2L2.2 11.8" stroke="#111" stroke-width="2.8"/></svg>
<div style="position:absolute;left:1136.9px;top:224.9px;width:33.1px;height:32.5px;background:#dcd8d4;border-radius:6px"></div>
<div style="position:absolute;left:1143.5px;top:230.5px;width:20px;height:20px;background:#98b5d8;border:1.5px solid #333;box-sizing:border-box"></div>
<div style="position:absolute;left:1177.2px;top:230.5px;width:20px;height:20px;background:linear-gradient(135deg,#98b5d8,#fff);border:1.5px solid #333;box-sizing:border-box"></div>
<div style="position:absolute;left:1211.4px;top:230.5px;width:20px;height:20px;background:radial-gradient(circle at 55% 50%,#fff,#98b5d8 75%);border:1.5px solid #333;box-sizing:border-box"></div>
<div style="position:absolute;left:1245.5px;top:230.5px;width:20px;height:20px;background:conic-gradient(#fff 0 25%,#98b5d8 0 50%,#fff 0 75%,#98b5d8 0);border:1.5px solid #333;box-sizing:border-box"></div>
<svg style="position:absolute;left:1279.6px;top:230.5px" width="20" height="20" viewBox="0 0 20 20"><rect x="0.75" y="0.75" width="18.5" height="18.5" fill="#98b5d8" stroke="#333" stroke-width="1.5"/><path d="M1.5 1.5H5.5L1.5 5.5Z M14.5 1.5H18.5V5.5Z M1.5 14.5V18.5H5.5Z M18.5 14.5V18.5H14.5Z M10 5.8L14.2 10L10 14.2L5.8 10Z M10 1.5L12.3 3.8L10 6.1L7.7 3.8Z M10 13.9L12.3 16.2L10 18.5L7.7 16.2Z M1.5 7.7L3.8 10L1.5 12.3Z M18.5 7.7L16.2 10L18.5 12.3Z" fill="#fff"/></svg>
<svg style="position:absolute;left:1313.7px;top:230.5px" width="20" height="20" viewBox="0 0 20 20"><rect x="0.75" y="0.75" width="18.5" height="18.5" fill="#98b5d8" stroke="#333" stroke-width="1.5"/><rect x="3" y="3" width="13" height="13" fill="#fff"/><path d="M16 3V16H3" fill="none" stroke="#333" stroke-width="1.5"/></svg>
<div class="t" style="position:absolute;left:1351.5px;top:228.5px;font-size:25px;line-height:1;color:#111;font-weight:700;white-space:pre;">?</div>
<div style="position:absolute;left:1550.2px;top:224.1px;width:33.5px;height:33.8px;background:#d9d5d1;border-radius:6px"></div>
<svg style="position:absolute;left:0px;top:0px" width="1600" height="996" viewBox="0 0 1600 996"><path d="M1532.9 234.7C1530.9 232 1527.9 230.9 1526.1000000000001 231C1523.4 231.5 1523.1000000000001 236 1523.2 239C1523.4 245 1527.9 250.6 1532.9 250.6C1537.9 250.6 1542.4 245 1542.6000000000001 239C1542.7 236 1542.4 231.5 1539.7 231C1537.9 230.9 1534.9 232 1532.9 234.7ZM1532.9 234.6C1530.4 237.5 1528.6000000000001 241 1528.6000000000001 243.5C1528.6000000000001 246 1530.4 246.8 1532.9 246.8C1535.4 246.8 1537.2 246 1537.2 243.5C1537.2 241 1535.4 237.5 1532.9 234.6Z" fill="#000" fill-rule="evenodd"/><path d="M1566.9 234.7C1564.9 232 1561.9 230.9 1560.1000000000001 231C1557.4 231.5 1557.1000000000001 236 1557.2 239C1557.4 245 1561.9 250.6 1566.9 250.6C1571.9 250.6 1576.4 245 1576.6000000000001 239C1576.7 236 1576.4 231.5 1573.7 231C1571.9 230.9 1568.9 232 1566.9 234.7Z" fill="#000"/></svg>
<div class="t" style="position:absolute;left:1104.5px;top:281.5px;font-size:14.1px;line-height:1;color:#222;font-weight:700;white-space:pre;">Flat colour</div>
<div style="position:absolute;left:1460px;top:269.4px;width:121.2px;height:40.3px;background:linear-gradient(#f8f7f6,#edebe9);border:1px solid #cdc7c2;border-radius:5px;box-sizing:border-box"></div>
<svg style="position:absolute;left:0px;top:0px" width="1600" height="996" viewBox="0 0 1600 996"><defs><clipPath id="cR"><circle cx="1484" cy="285.5" r="6.2"/></clipPath><clipPath id="cG"><circle cx="1479.6" cy="293" r="6.2"/></clipPath></defs><circle cx="1484" cy="285.5" r="6.2" fill="#f00"/><circle cx="1479.6" cy="293" r="6.2" fill="#0e0"/><circle cx="1488.4" cy="293" r="6.2" fill="#00f"/><circle cx="1479.6" cy="293" r="6.2" fill="#ff0" clip-path="url(#cR)"/><circle cx="1488.4" cy="293" r="6.2" fill="#f0f" clip-path="url(#cR)"/><circle cx="1488.4" cy="293" r="6.2" fill="#0ff" clip-path="url(#cG)"/><g clip-path="url(#cR)"><circle cx="1488.4" cy="293" r="6.2" fill="#fff" clip-path="url(#cG)"/></g></svg>
<div class="t" style="position:absolute;left:1502.5px;top:280.3px;font-size:15.5px;line-height:1;color:#2e3436;font-weight:400;white-space:pre;">RGB</div>
<svg style="position:absolute;left:1552.5px;top:286px" width="16" height="10" viewBox="0 0 16 10"><path d="M0 0H15L7.5 9Z" fill="#2e3436"/></svg>
<div class="t" style="position:absolute;left:1108.5px;top:328.8px;font-size:14.6px;line-height:1;color:#333;font-weight:400;white-space:pre;">R:</div>
<div style="position:absolute;left:1128.9px;top:315.3px;width:357.29999999999995px;height:41.4px;background:linear-gradient(90deg,#006400,#ff6400)"></div>
<div style="position:absolute;left:1491.7px;top:315.3px;width:87px;height:41.4px;background:#fff;border:1px solid #cdc7c2;border-radius:5px;box-sizing:border-box"></div>
<div style="position:absolute;left:1537.2px;top:316.3px;width:1px;height:39.4px;background:#ece9e6"></div>
<div style="position:absolute;left:1558px;top:316.3px;width:1px;height:39.4px;background:#ece9e6"></div>
<div class="t" style="position:absolute;left:1499.5px;top:327.8411px;font-size:14.6px;line-height:1;color:#000;font-weight:400;white-space:pre;">0</div>
<div style="position:absolute;left:1538.6px;top:335.0px;width:18px;height:2px;background:#c9c9c9"></div>
<div style="position:absolute;left:1559.35px;top:335.0px;width:18px;height:2px;background:#2e3436"></div>
<div style="position:absolute;left:1567.35px;top:327.0px;width:2px;height:18px;background:#2e3436"></div>
<div class="t" style="position:absolute;left:1108.5px;top:375.0px;font-size:14.6px;line-height:1;color:#333;font-weight:400;white-space:pre;">G:</div>
<div style="position:absolute;left:1128.9px;top:361.5px;width:357.29999999999995px;height:41.4px;background:linear-gradient(90deg,#000,#00ff00)"></div>
<div style="position:absolute;left:1491.7px;top:361.5px;width:87px;height:41.4px;background:#fff;border:1px solid #cdc7c2;border-radius:5px;box-sizing:border-box"></div>
<div style="position:absolute;left:1537.2px;top:362.5px;width:1px;height:39.4px;background:#ece9e6"></div>
<div style="position:absolute;left:1558px;top:362.5px;width:1px;height:39.4px;background:#ece9e6"></div>
<div class="t" style="position:absolute;left:1499.5px;top:374.0411px;font-size:14.6px;line-height:1;color:#000;font-weight:400;white-space:pre;">100</div>
<div style="position:absolute;left:1538.6px;top:381.2px;width:18px;height:2px;background:#2e3436"></div>
<div style="position:absolute;left:1559.35px;top:381.2px;width:18px;height:2px;background:#2e3436"></div>
<div style="position:absolute;left:1567.35px;top:373.2px;width:2px;height:18px;background:#2e3436"></div>
<div class="t" style="position:absolute;left:1108.5px;top:421.2px;font-size:14.6px;line-height:1;color:#333;font-weight:400;white-space:pre;">B:</div>
<div style="position:absolute;left:1128.9px;top:407.7px;width:357.29999999999995px;height:41.4px;background:linear-gradient(90deg,#006400,#0064ff)"></div>
<div style="position:absolute;left:1491.7px;top:407.7px;width:87px;height:41.4px;background:#fff;border:1px solid #cdc7c2;border-radius:5px;box-sizing:border-box"></div>
<div style="position:absolute;left:1537.2px;top:408.7px;width:1px;height:39.4px;background:#ece9e6"></div>
<div style="position:absolute;left:1558px;top:408.7px;width:1px;height:39.4px;background:#ece9e6"></div>
<div class="t" style="position:absolute;left:1499.5px;top:420.24109999999996px;font-size:14.6px;line-height:1;color:#000;font-weight:400;white-space:pre;">0</div>
<div style="position:absolute;left:1538.6px;top:427.4px;width:18px;height:2px;background:#c9c9c9"></div>
<div style="position:absolute;left:1559.35px;top:427.4px;width:18px;height:2px;background:#2e3436"></div>
<div style="position:absolute;left:1567.35px;top:419.4px;width:2px;height:18px;background:#2e3436"></div>
<div class="t" style="position:absolute;left:1108.5px;top:467.8px;font-size:14.6px;line-height:1;color:#333;font-weight:400;white-space:pre;">A:</div>
<div style="position:absolute;left:1128.9px;top:454.3px;width:357.29999999999995px;height:41.4px;background:linear-gradient(90deg,rgba(0,100,0,0.05),rgba(0,100,0,1)),conic-gradient(#999 0 25%,#555 0 50%,#999 0 75%,#555 0) 0 0/20px 20px"></div>
<div style="position:absolute;left:1491.7px;top:454.3px;width:87px;height:41.4px;background:#fff;border:1px solid #cdc7c2;border-radius:5px;box-sizing:border-box"></div>
<div style="position:absolute;left:1537.2px;top:455.3px;width:1px;height:39.4px;background:#ece9e6"></div>
<div style="position:absolute;left:1558px;top:455.3px;width:1px;height:39.4px;background:#ece9e6"></div>
<div class="t" style="position:absolute;left:1499.5px;top:466.8411px;font-size:14.6px;line-height:1;color:#000;font-weight:400;white-space:pre;">100</div>
<div style="position:absolute;left:1538.6px;top:474.0px;width:18px;height:2px;background:#2e3436"></div>
<div style="position:absolute;left:1559.35px;top:474.0px;width:18px;height:2px;background:#c9c9c9"></div>
<div style="position:absolute;left:1567.35px;top:466.0px;width:2px;height:18px;background:#c9c9c9"></div>
<svg style="position:absolute;left:1128.9px;top:315.3px" width="5" height="41.4" viewBox="0 0 5 41.4"><path d="M0 0H4.5L0 4.5Z M0 41.4H4.5L0 36.9Z" fill="#000"/></svg>
<svg style="position:absolute;left:1128.9px;top:407.7px" width="5" height="41.4" viewBox="0 0 5 41.4"><path d="M0 0H4.5L0 4.5Z M0 41.4H4.5L0 36.9Z" fill="#000"/></svg>
<svg style="position:absolute;left:1481.2px;top:454.3px" width="5" height="41.4" viewBox="0 0 5 41.4"><path d="M5 0H0.5L5 4.5Z M5 41.4H0.5L5 36.9Z" fill="#000"/></svg>
<svg style="position:absolute;left:1259px;top:360px" width="18" height="46" viewBox="0 0 18 46"><path d="M2 1H16L9 8Z" fill="#fff" stroke="#333" stroke-width="0.8"/><path d="M2 44H16L9 37Z" fill="#fff" stroke="#333" stroke-width="0.8"/></svg>
<svg style="position:absolute;left:1106px;top:735px" width="20" height="20" viewBox="0 0 20 20"><defs><linearGradient id="tg" x1="0" x2="1"><stop offset="0" stop-color="#bfe8bf"/><stop offset="1" stop-color="#f0c8e8"/></linearGradient></defs><path d="M2 1L18 10L3 19Z" fill="url(#tg)"/></svg>
<svg style="position:absolute;left:1131px;top:735px" width="20" height="20" viewBox="0 0 20 20"><circle cx="10" cy="10" r="7.5" fill="none" stroke="#f3b7b7" stroke-width="5"/></svg>
<svg style="position:absolute;left:1169px;top:735px" width="20" height="20" viewBox="0 0 20 20"><path d="M2 18L12 8" stroke="#333" stroke-width="2.5"/><path d="M10 6L14 2Q17 0 18 2Q20 3 18 6L14 10Z" fill="#111"/></svg>
<div class="t" style="position:absolute;left:1443.5px;top:738px;font-size:14.6px;line-height:1;color:#333;font-weight:400;white-space:pre;">RGBA:</div>
<div style="position:absolute;left:1492.3px;top:726.1px;width:88.6px;height:39.9px;background:#fff;border:2px solid #3584e4;border-radius:5px;box-sizing:border-box"></div>
<div class="t" style="position:absolute;left:1502px;top:737.5px;font-size:15.4px;line-height:1;color:#000;font-weight:400;white-space:pre;">006400ff</div>
<div style="position:absolute;left:1562px;top:736px;width:1px;height:19px;background:#000"></div>
<div class="t" style="position:absolute;left:1361px;top:789.5px;font-size:15.1px;line-height:1;color:#333;font-weight:400;white-space:pre;">Blend mode:</div>
<div style="position:absolute;left:1445.4px;top:778.1px;width:141.9px;height:40.5px;background:linear-gradient(#f8f7f6,#edebe9);border:1px solid #cdc7c2;border-radius:5px;box-sizing:border-box"></div>
<div class="t" style="position:absolute;left:1460px;top:789.5px;font-size:15.2px;line-height:1;color:#2e3436;font-weight:400;white-space:pre;">Normal</div>
<svg style="position:absolute;left:1558px;top:794px" width="16" height="10" viewBox="0 0 16 10"><path d="M0 0H15L7.5 9Z" fill="#2e3436"/></svg>
<div style="position:absolute;left:1101.2px;top:823.4px;width:483.5px;height:37.6px;background:#e3e0dc;border:1.5px solid #cdc7c2;border-radius:5px;box-sizing:border-box"></div>
<div style="position:absolute;left:1496.4px;top:824.4px;width:87.3px;height:35.6px;background:#fff;border-radius:0 4px 4px 0"></div>
<div style="position:absolute;left:1542.7px;top:824.4px;width:1px;height:35.6px;background:#ece9e6"></div>
<div style="position:absolute;left:1564px;top:824.4px;width:1px;height:35.6px;background:#ece9e6"></div>
<div style="position:absolute;left:1103px;top:826px;width:3px;height:33px;background:#2a6bc4;border-radius:2px"></div>
<div class="t" style="position:absolute;left:1107px;top:834.5px;font-size:14.6px;line-height:1;color:#111;font-weight:400;white-space:pre;">Blur (%)</div>
<div class="t" style="position:absolute;left:1504.4px;top:833.4px;font-size:14.9px;line-height:1;color:#000;font-weight:400;white-space:pre;">0.0</div>
<div style="position:absolute;left:1544.5px;top:841px;width:17px;height:2px;background:#c9c9c9"></div>
<div style="position:absolute;left:1565.5px;top:841px;width:17px;height:2px;background:#2e3436"></div>
<div style="position:absolute;left:1573px;top:833px;width:2px;height:17px;background:#2e3436"></div>
<div style="position:absolute;left:1101.2px;top:867.4px;width:483.5px;height:37.3px;background:#fff;border:1.5px solid #cdc7c2;border-radius:5px;box-sizing:border-box"></div>
<div style="position:absolute;left:1103.2px;top:869.4px;width:392.3px;height:33.3px;background:#3584e4;border-radius:3px 0 0 3px"></div>
<div style="position:absolute;left:1542.7px;top:868.4px;width:1px;height:35.3px;background:#ece9e6"></div>
<div style="position:absolute;left:1564px;top:868.4px;width:1px;height:35.3px;background:#ece9e6"></div>
<div class="t" style="position:absolute;left:1107px;top:878px;font-size:14.6px;line-height:1;color:#fff;font-weight:400;white-space:pre;">Opacity (%)</div>
<div class="t" style="position:absolute;left:1505px;top:878px;font-size:14.9px;line-height:1;color:#000;font-weight:400;white-space:pre;">100.0</div>
<div style="position:absolute;left:1544.5px;top:885px;width:17px;height:2px;background:#2e3436"></div>
<div style="position:absolute;left:1565.5px;top:885px;width:17px;height:2px;background:#c9c9c9"></div>
<div style="position:absolute;left:1573px;top:877px;width:2px;height:17px;background:#c9c9c9"></div>
<div style="position:absolute;left:22.1px;top:932.4px;width:19.149295774647886px;height:19.6px;background:#000000"></div>
<div style="position:absolute;left:42.849295774647885px;top:932.4px;width:19.149295774647886px;height:19.6px;background:#1a1a1a"></div>
<div style="position:absolute;left:63.598591549295776px;top:932.4px;width:19.149295774647886px;height:19.6px;background:#333333"></div>
<div style="position:absolute;left:84.34788732394367px;top:932.4px;width:19.149295774647886px;height:19.6px;background:#4d4d4d"></div>
<div style="position:absolute;left:105.09718309859156px;top:932.4px;width:19.149295774647886px;height:19.6px;background:#666666"></div>
<div style="position:absolute;left:125.84647887323945px;top:932.4px;width:19.149295774647886px;height:19.6px;background:#808080"></div>
<div style="position:absolute;left:146.5957746478873px;top:932.4px;width:19.149295774647886px;height:19.6px;background:#999999"></div>
<div style="position:absolute;left:167.3450704225352px;top:932.4px;width:19.149295774647886px;height:19.6px;background:#b3b3b3"></div>
<div style="position:absolute;left:188.0943661971831px;top:932.4px;width:19.149295774647886px;height:19.6px;background:#cccccc"></div>
<div style="position:absolute;left:208.84366197183098px;top:932.4px;width:19.149295774647886px;height:19.6px;background:#e6e6e6"></div>
<div style="position:absolute;left:229.59295774647887px;top:932.4px;width:19.149295774647886px;height:19.6px;background:#ececec"></div>
<div style="position:absolute;left:250.34225352112676px;top:932.4px;width:19.149295774647886px;height:19.6px;background:#f2f2f2"></div>
<div style="position:absolute;left:271.09154929577466px;top:932.4px;width:19.149295774647886px;height:19.6px;background:#f9f9f9"></div>
<div style="position:absolute;left:291.8408450704226px;top:932.4px;width:19.149295774647886px;height:19.6px;background:#ffffff"></div>
<div style="position:absolute;left:312.59014084507044px;top:932.4px;width:19.149295774647886px;height:19.6px;background:#800000"></div>
<div style="position:absolute;left:333.33943661971836px;top:932.4px;width:19.149295774647886px;height:19.6px;background:#ff0000"></div>
<div style="position:absolute;left:354.0887323943662px;top:932.4px;width:19.149295774647886px;height:19.6px;background:#808000"></div>
<div style="position:absolute;left:374.8380281690141px;top:932.4px;width:19.149295774647886px;height:19.6px;background:#ffff00"></div>
<div style="position:absolute;left:395.587323943662px;top:932.4px;width:19.149295774647886px;height:19.6px;background:#008000"></div>
<div style="position:absolute;left:416.33661971830986px;top:932.4px;width:19.149295774647886px;height:19.6px;background:#00ff00"></div>
<div style="position:absolute;left:437.0859154929578px;top:932.4px;width:19.149295774647886px;height:19.6px;background:#008080"></div>
<div style="position:absolute;left:457.83521126760564px;top:932.4px;width:19.149295774647886px;height:19.6px;background:#00ffff"></div>
<div style="position:absolute;left:478.58450704225356px;top:932.4px;width:19.149295774647886px;height:19.6px;background:#000080"></div>
<div style="position:absolute;left:499.3338028169014px;top:932.4px;width:19.149295774647886px;height:19.6px;background:#0000ff"></div>
<div style="position:absolute;left:520.0830985915493px;top:932.4px;width:19.149295774647886px;height:19.6px;background:#800080"></div>
<div style="position:absolute;left:540.8323943661971px;top:932.4px;width:19.149295774647886px;height:19.6px;background:#ff00ff"></div>
<div style="position:absolute;left:561.5816901408451px;top:932.4px;width:19.149295774647886px;height:19.6px;background:#2b0000"></div>
<div style="position:absolute;left:582.330985915493px;top:932.4px;width:19.149295774647886px;height:19.6px;background:#550000"></div>
<div style="position:absolute;left:603.0802816901409px;top:932.4px;width:19.149295774647886px;height:19.6px;background:#800000"></div>
<div style="position:absolute;left:623.8295774647887px;top:932.4px;width:19.149295774647886px;height:19.6px;background:#aa0000"></div>
<div style="position:absolute;left:644.5788732394367px;top:932.4px;width:19.149295774647886px;height:19.6px;background:#d40000"></div>
<div style="position:absolute;left:665.3281690140846px;top:932.4px;width:19.149295774647886px;height:19.6px;background:#ff0000"></div>
<div style="position:absolute;left:686.0774647887324px;top:932.4px;width:19.149295774647886px;height:19.6px;background:#ff2a2a"></div>
<div style="position:absolute;left:706.8267605633803px;top:932.4px;width:19.149295774647886px;height:19.6px;background:#ff5555"></div>
<div style="position:absolute;left:727.5760563380281px;top:932.4px;width:19.149295774647886px;height:19.6px;background:#ff8080"></div>
<div style="position:absolute;left:748.3253521126761px;top:932.4px;width:19.149295774647886px;height:19.6px;background:#ffaaaa"></div>
<div style="position:absolute;left:769.074647887324px;top:932.4px;width:19.149295774647886px;height:19.6px;background:#ffd5d5"></div>
<div style="position:absolute;left:789.8239436619718px;top:932.4px;width:19.149295774647886px;height:19.6px;background:#280b0b"></div>
<div style="position:absolute;left:810.5732394366197px;top:932.4px;width:19.149295774647886px;height:19.6px;background:#501616"></div>
<div style="position:absolute;left:831.3225352112677px;top:932.4px;width:19.149295774647886px;height:19.6px;background:#782121"></div>
<div style="position:absolute;left:852.0718309859155px;top:932.4px;width:19.149295774647886px;height:19.6px;background:#a02c2c"></div>
<div style="position:absolute;left:872.8211267605634px;top:932.4px;width:19.149295774647886px;height:19.6px;background:#c83737"></div>
<div style="position:absolute;left:893.5704225352113px;top:932.4px;width:19.149295774647886px;height:19.6px;background:#d35f5f"></div>
<div style="position:absolute;left:914.3197183098591px;top:932.4px;width:19.149295774647886px;height:19.6px;background:#de8787"></div>
<div style="position:absolute;left:935.0690140845071px;top:932.4px;width:19.149295774647886px;height:19.6px;background:#e9afaf"></div>
<div style="position:absolute;left:955.818309859155px;top:932.4px;width:19.149295774647886px;height:19.6px;background:#f4d7d7"></div>
<div style="position:absolute;left:976.5676056338028px;top:932.4px;width:19.149295774647886px;height:19.6px;background:#241c1c"></div>
<div style="position:absolute;left:997.3169014084507px;top:932.4px;width:19.149295774647886px;height:19.6px;background:#483737"></div>
<div style="position:absolute;left:1018.0661971830986px;top:932.4px;width:19.149295774647886px;height:19.6px;background:#6c5353"></div>
<div style="position:absolute;left:1038.8154929577465px;top:932.4px;width:19.149295774647886px;height:19.6px;background:#916f6f"></div>
<div style="position:absolute;left:1059.5647887323942px;top:932.4px;width:19.149295774647886px;height:19.6px;background:#ac9393"></div>
<div style="position:absolute;left:1080.3140845070423px;top:932.4px;width:19.149295774647886px;height:19.6px;background:#c8b7b7"></div>
<div style="position:absolute;left:1101.0633802816901px;top:932.4px;width:19.149295774647886px;height:19.6px;background:#e3dbdb"></div>
<div style="position:absolute;left:1121.812676056338px;top:932.4px;width:19.149295774647886px;height:19.6px;background:#2b1100"></div>
<div style="position:absolute;left:1142.5619718309858px;top:932.4px;width:19.149295774647886px;height:19.6px;background:#552200"></div>
<div style="position:absolute;left:1163.3112676056337px;top:932.4px;width:19.149295774647886px;height:19.6px;background:#803300"></div>
<div style="position:absolute;left:1184.0605633802816px;top:932.4px;width:19.149295774647886px;height:19.6px;background:#aa4400"></div>
<div style="position:absolute;left:1204.8098591549294px;top:932.4px;width:19.149295774647886px;height:19.6px;background:#d45500"></div>
<div style="position:absolute;left:1225.5591549295773px;top:932.4px;width:19.149295774647886px;height:19.6px;background:#ff6600"></div>
<div style="position:absolute;left:1246.3084507042252px;top:932.4px;width:19.149295774647886px;height:19.6px;background:#ff7f2a"></div>
<div style="position:absolute;left:1267.0577464788732px;top:932.4px;width:19.149295774647886px;height:19.6px;background:#ff9955"></div>
<div style="position:absolute;left:1287.807042253521px;top:932.4px;width:19.149295774647886px;height:19.6px;background:#ffb380"></div>
<div style="position:absolute;left:1308.556338028169px;top:932.4px;width:19.149295774647886px;height:19.6px;background:#ffccaa"></div>
<div style="position:absolute;left:1329.3056338028168px;top:932.4px;width:19.149295774647886px;height:19.6px;background:#ffe6d5"></div>
<div style="position:absolute;left:1350.0549295774647px;top:932.4px;width:19.149295774647886px;height:19.6px;background:#28170b"></div>
<div style="position:absolute;left:1370.8042253521126px;top:932.4px;width:19.149295774647886px;height:19.6px;background:#502d16"></div>
<div style="position:absolute;left:1391.5535211267604px;top:932.4px;width:19.149295774647886px;height:19.6px;background:#784421"></div>
<div style="position:absolute;left:1412.3028169014083px;top:932.4px;width:19.149295774647886px;height:19.6px;background:#a05a2c"></div>
<div style="position:absolute;left:1433.0521126760561px;top:932.4px;width:19.149295774647886px;height:19.6px;background:#c87137"></div>
<div style="position:absolute;left:1453.8014084507042px;top:932.4px;width:19.149295774647886px;height:19.6px;background:#d38d5f"></div>
<div style="position:absolute;left:1474.550704225352px;top:932.4px;width:19.149295774647886px;height:19.6px;background:#deaa87"></div>
<svg style="position:absolute;left:1px;top:932px" width="20" height="20" viewBox="0 0 20 20"><path d="M2 2L18 18M18 2L2 18" stroke="#a23030" stroke-width="2"/></svg>
<svg style="position:absolute;left:1505px;top:928px" width="20" height="14" viewBox="0 0 20 14"><path d="M2 11L9.5 3L17 11" fill="none" stroke="#2e3436" stroke-width="2.4"/></svg>
<svg style="position:absolute;left:1542px;top:928px" width="20" height="14" viewBox="0 0 20 14"><path d="M2 3L9.5 11L17 3" fill="none" stroke="#2e3436" stroke-width="2.4"/></svg>
<div style="position:absolute;left:1572.5px;top:920px;width:22.5px;height:32px;background:linear-gradient(#f8f7f6,#edebe9);border:1px solid #cdc7c2;border-radius:5px;box-sizing:border-box"></div>
<div style="position:absolute;left:1576.5px;top:929.5px;width:15px;height:2.4px;background:#2e3436"></div>
<div style="position:absolute;left:1576.5px;top:935.5px;width:15px;height:2.4px;background:#2e3436"></div>
<div style="position:absolute;left:1576.5px;top:941.5px;width:15px;height:2.4px;background:#2e3436"></div>
<div class="t" style="position:absolute;left:26px;top:958px;font-size:14.6px;line-height:1;color:#333;font-weight:400;white-space:pre;">Fill:</div>
<div class="t" style="position:absolute;left:3px;top:978px;font-size:14.6px;line-height:1;color:#333;font-weight:400;white-space:pre;">Stroke:</div>
<div style="position:absolute;left:68px;top:955px;width:61px;height:18.8px;background:#006400;border-radius:2px"></div>
<div class="t" style="position:absolute;left:79px;top:978px;font-size:14.6px;line-height:1;color:#333;font-weight:700;white-space:pre;">Unset</div>
<div class="t" style="position:absolute;left:143.5px;top:978px;font-size:14.6px;line-height:1;color:#333;font-weight:400;white-space:pre;">1.00</div>
<div class="t" style="position:absolute;left:183px;top:967px;font-size:14.6px;line-height:1;color:#333;font-weight:400;white-space:pre;">O:</div>
<div style="position:absolute;left:200.75px;top:955px;width:86.75px;height:40px;background:#fff;border:1px solid #cdc7c2;border-radius:5px;box-sizing:border-box"></div>
<div style="position:absolute;left:246.25px;top:956px;width:1px;height:38px;background:#ece9e6"></div>
<div style="position:absolute;left:267px;top:956px;width:1px;height:38px;background:#ece9e6"></div>
<div class="t" style="position:absolute;left:209.5px;top:966.8411000000001px;font-size:14.6px;line-height:1;color:#000;font-weight:400;white-space:pre;">100</div>
<div style="position:absolute;left:247.625px;top:974.0px;width:18px;height:2px;background:#2e3436"></div>
<div style="position:absolute;left:268.25px;top:974.0px;width:18px;height:2px;background:#c9c9c9"></div>
<div style="position:absolute;left:276.25px;top:966.0px;width:2px;height:18px;background:#c9c9c9"></div>
<div style="position:absolute;left:318.6px;top:966.6px;width:3.4px;height:16px;background:#fff"></div>
<div class="t" style="position:absolute;left:330px;top:967px;font-size:14.6px;line-height:1;color:#333;font-weight:400;white-space:pre;font-style:italic">[root]</div>
<svg style="position:absolute;left:386px;top:966px" width="22" height="16" viewBox="0 0 22 16"><path d="M1 9Q11 -1 21 9Q11 17 1 9Z" fill="none" stroke="#c8c8c8" stroke-width="1.5"/><circle cx="11" cy="9" r="3.5" fill="#c8c8c8"/><path d="M4 4L3 1M8 2L7.5 0M14 2L14.5 0M18 4L19 1" stroke="#c8c8c8" stroke-width="1.3"/></svg>
<svg style="position:absolute;left:432px;top:966px" width="18" height="20" viewBox="0 0 18 20"><path d="M4 9V6Q4 1 9 1Q14 1 14 5" fill="none" stroke="#cfcfcf" stroke-width="1.8"/><rect x="2" y="9" width="14" height="10" rx="1" fill="#eee" stroke="#cfcfcf"/><rect x="8" y="12" width="2" height="4" fill="#cfcfcf"/></svg>
<div style="position:absolute;left:462.5px;top:959px;width:1px;height:30px;background:#dcd8d4"></div>
<div class="t" style="position:absolute;left:472.5px;top:966.5px;font-size:14.6px;line-height:1;color:#222;white-space:pre"><b>Group</b> of <b>1</b> object in root. Click selection again to toggle scale/rotation handles.</div>
<div style="position:absolute;left:1214.5px;top:955px;width:1px;height:32px;background:#dcd8d4"></div>
<div class="t" style="position:absolute;left:1227.5px;top:955px;font-size:14.4px;line-height:1;color:#333;font-weight:400;white-space:pre;">X:</div>
<div class="t" style="position:absolute;left:1227.5px;top:970.5px;font-size:14.4px;line-height:1;color:#333;font-weight:400;white-space:pre;">Y:</div>
<div class="t" style="position:absolute;left:1264.5px;top:955px;font-size:14.4px;line-height:1;color:#333;font-weight:400;white-space:pre;">2.66</div>
<div class="t" style="position:absolute;left:1264.5px;top:970.5px;font-size:14.4px;line-height:1;color:#333;font-weight:400;white-space:pre;">5.01</div>
<div class="t" style="position:absolute;left:1306px;top:967px;font-size:14.6px;line-height:1;color:#333;font-weight:400;white-space:pre;">Z:</div>
<div style="position:absolute;left:1319.25px;top:955.5px;width:112.75px;height:39.5px;background:#fff;border:1px solid #cdc7c2;border-radius:5px;box-sizing:border-box"></div>
<div style="position:absolute;left:1378.75px;top:956.5px;width:1px;height:37.5px;background:#ece9e6"></div>
<div style="position:absolute;left:1404.5px;top:956.5px;width:1px;height:37.5px;background:#ece9e6"></div>
<div class="t" style="position:absolute;left:1325px;top:967.0911000000001px;font-size:14.6px;line-height:1;color:#000;font-weight:400;white-space:pre;">1004%</div>
<div style="position:absolute;left:1382.625px;top:974.25px;width:18px;height:2px;background:#2e3436"></div>
<div style="position:absolute;left:1409.25px;top:974.25px;width:18px;height:2px;background:#2e3436"></div>
<div style="position:absolute;left:1417.25px;top:966.25px;width:2px;height:18px;background:#2e3436"></div>
<div class="t" style="position:absolute;left:1445.5px;top:967px;font-size:14.6px;line-height:1;color:#333;font-weight:400;white-space:pre;">R:</div>
<div style="position:absolute;left:1460.75px;top:955.5px;width:121.25px;height:39.5px;background:#fff;border:1px solid #cdc7c2;border-radius:5px;box-sizing:border-box"></div>
<div style="position:absolute;left:1528.75px;top:956.5px;width:1px;height:37.5px;background:#ece9e6"></div>
<div style="position:absolute;left:1553.75px;top:956.5px;width:1px;height:37.5px;background:#ece9e6"></div>
<div class="t" style="position:absolute;left:1476.3px;top:967.0911000000001px;font-size:14.6px;line-height:1;color:#000;font-weight:400;white-space:pre;">0.00°</div>
<div style="position:absolute;left:1532.25px;top:974.25px;width:18px;height:2px;background:#2e3436"></div>
<div style="position:absolute;left:1558.875px;top:974.25px;width:18px;height:2px;background:#2e3436"></div>
<div style="position:absolute;left:1566.875px;top:966.25px;width:2px;height:18px;background:#2e3436"></div>
<svg style="position:absolute;left:0;top:0" width="1600" height="996" viewBox="0 0 1600 996"><defs>
<linearGradient id="pg" x1="0" y1="0" x2="1" y2="1"><stop offset="0" stop-color="#fff"/><stop offset="1" stop-color="#cfcfca"/></linearGradient>
<linearGradient id="bg1" x1="0" y1="0" x2="1" y2="1"><stop offset="0" stop-color="#eef3f9"/><stop offset="1" stop-color="#9db7d8"/></linearGradient>
<linearGradient id="bg2" x1="0" y1="0" x2="0" y2="1"><stop offset="0" stop-color="#d8e4f2"/><stop offset="1" stop-color="#a9c1df"/></linearGradient>
<linearGradient id="yg" x1="0" y1="0" x2="0" y2="1"><stop offset="0" stop-color="#fce38a"/><stop offset="1" stop-color="#e6b422"/></linearGradient>
<radialGradient id="mg" cx="0.4" cy="0.35" r="0.7"><stop offset="0" stop-color="#f5f8fc"/><stop offset="1" stop-color="#a8c0dc"/></radialGradient>
<radialGradient id="rg" cx="0.4" cy="0.35" r="0.7"><stop offset="0" stop-color="#fff"/><stop offset="1" stop-color="#f7a0a8"/></radialGradient>
<linearGradient id="gg" x1="0" y1="0" x2="1" y2="1"><stop offset="0" stop-color="#3eb86b"/><stop offset="1" stop-color="#d9f3df"/></linearGradient>
<linearGradient id="lock" x1="0" y1="0" x2="0" y2="1"><stop offset="0" stop-color="#fde58c"/><stop offset="1" stop-color="#d99a12"/></linearGradient>
</defs><path d="M26.5 63H21Q19 63 19 61V47Q19 45 21 45H29.5L34 49.5Q35 50.5 35 52" fill="none" stroke="#2e3436" stroke-linecap="round" stroke-linejoin="round" stroke-width="2.1"/><path d="M27.5 58.6H36.4M31.9 54.5V63.6" fill="none" stroke="#2e3436" stroke-linecap="round" stroke-linejoin="round" stroke-width="2.1" stroke-linecap="butt"/><path d="M64.5 56.5V49Q64.5 47 66.5 47H69.5L71.5 49H76Q78 49 78 51M66 57.5L67.6 53.5Q68 52 70 52H79.5Q81 52 80.6 53.6L79 60Q78.6 61.5 77 61.5H65.5Q63.5 61.5 63.5 59.5V56" fill="none" stroke="#2e3436" stroke-linecap="round" stroke-linejoin="round" stroke-width="2.1"/><path d="M117 45.3V57.5M112.3 53L117 57.6L121.7 53M108.8 62.5H125.3" fill="none" stroke="#2e3436" stroke-linecap="round" stroke-linejoin="round" stroke-width="2.2"/><path d="M158.8 46H165.8V48.5H158.8Z" fill="#2e3436"/><path d="M155 49.5H170Q172 49.5 172 51.5V57.5Q172 59 170.5 59H169.5V60.5Q169.5 62.5 167.5 62.5H157Q155 62.5 155 60.5V59H154Q152.5 59 152.5 57.5V51.5Q152.5 49.5 155 49.5Z" fill="#2e3436"/><rect x="157.2" y="58" width="10" height="3" fill="#f6f5f4"/><path d="M220.2 44.8H229.7L233.79999999999998 49V63.6H220.2Z" fill="url(#pg)" stroke="#222" stroke-width="1"/><path d="M229.7 44.8V49H233.79999999999998" fill="#fff" stroke="#222" stroke-width="0.8"/><path d="M260.3 44.8H269.8L273.90000000000003 49V63.6H260.3Z" fill="url(#pg)" stroke="#222" stroke-width="1"/><path d="M269.8 44.8V49H273.90000000000003" fill="#fff" stroke="#222" stroke-width="0.8"/><path d="M214.5 54.6H223" stroke="#111" stroke-width="1.5"/><path d="M222.5 51.6L226.6 54.6L222.5 57.6Z" fill="#111"/><path d="M267 54.6H276" stroke="#111" stroke-width="1.5"/><path d="M275.5 51.6L279.5 54.6L275.5 57.6Z" fill="#111"/><path d="M328 48L323 53L328 58M323.5 53H334.5Q340.5 53 340.5 57.5Q340.5 60 338.5 61" fill="none" stroke="#2e3436" stroke-linecap="round" stroke-linejoin="round" stroke-width="2.3"/><path d="M381 48L386 53L381 58M385.5 53H374.5Q368.5 53 368.5 57.5Q368.5 60 370.5 61" fill="none" stroke="#c8c8c8" stroke-width="2.3" stroke-linecap="round" stroke-linejoin="round"/><path d="M432.8 55.2Q430.5 55 430.5 52.5V47.5Q430.5 45 433 45H438Q440.3 45 440.5 47.3" fill="none" stroke="#2e3436" stroke-linecap="round" stroke-linejoin="round" stroke-width="2.1"/><rect x="436.8" y="51.8" width="11.3" height="11.2" rx="2.3" fill="none" stroke="#2e3436" stroke-linecap="round" stroke-linejoin="round" stroke-width="2.1"/><circle cx="478.4" cy="50.6" r="2.7" fill="none" stroke="#2e3436" stroke-linecap="round" stroke-linejoin="round" stroke-width="1.9"/><circle cx="483.3" cy="60.4" r="2.7" fill="none" stroke="#2e3436" stroke-linecap="round" stroke-linejoin="round" stroke-width="1.9"/><path d="M480.8 52.8H493.6M486.2 50.2L489.2 46.2M482.5 57.5L485.5 52.8" fill="none" stroke="#2e3436" stroke-linecap="round" stroke-linejoin="round" stroke-width="1.9"/><rect x="522.2" y="46.7" width="15" height="16" rx="2.5" fill="none" stroke="#2e3436" stroke-linecap="round" stroke-linejoin="round" stroke-width="2.1"/><rect x="526.5" y="44.8" width="6.5" height="4" rx="1" fill="#2e3436"/><circle cx="589.8" cy="53.3" r="8.3" fill="url(#mg)" stroke="#111" stroke-width="1.3"/><path d="M595.3 58.8L599.3 62.8" stroke="#111" stroke-width="2.6"/><circle cx="635.1" cy="53.3" r="8.3" fill="url(#mg)" stroke="#111" stroke-width="1.3"/><path d="M640.6 58.8L644.6 62.8" stroke="#111" stroke-width="2.6"/><circle cx="680.4" cy="53.3" r="8.3" fill="url(#mg)" stroke="#111" stroke-width="1.3"/><path d="M685.9 58.8L689.9 62.8" stroke="#111" stroke-width="2.6"/><rect x="584.5" y="49.5" width="10.5" height="7.5" fill="#fff" stroke="#222" stroke-width="0.9" stroke-dasharray="1.2 1"/><rect x="630" y="48" width="5.5" height="5.5" fill="url(#yg)" stroke="#333" stroke-width="0.9"/><rect x="633.5" y="51.5" width="5.5" height="5.5" fill="url(#yg)" stroke="#333" stroke-width="0.9"/><rect x="676.8" y="48.5" width="7" height="10" fill="url(#pg)" stroke="#111" stroke-width="1.4"/><rect x="721" y="45.5" width="12.5" height="17.5" fill="url(#pg)" stroke="#999" stroke-width="0.6"/><path d="M720 48.5V45H723.5M731 45H734.5V48.5M734.5 60V63.5H731M723.5 63.5H720V60" fill="none" stroke="#111" stroke-width="1.5"/><rect x="780.4" y="44.9" width="12" height="11" fill="url(#bg2)" stroke="#333" stroke-width="1.1"/><rect x="783.8" y="48.2" width="15.3" height="15.3" fill="url(#bg1)" stroke="#222" stroke-width="1.3"/><rect x="825.6999999999999" y="44.9" width="12" height="11" fill="url(#bg2)" stroke="#333" stroke-width="1.1"/><rect x="829.0999999999999" y="48.2" width="15.3" height="15.3" fill="url(#bg1)" stroke="#222" stroke-width="1.3"/><rect x="871.0" y="44.9" width="12" height="11" fill="url(#bg2)" stroke="#333" stroke-width="1.1"/><rect x="874.4" y="48.2" width="15.3" height="15.3" fill="url(#bg1)" stroke="#222" stroke-width="1.3"/><path d="M833.5 56.5V54.5Q833.5 52 836 52Q838.5 52 838.5 54.5V56.5" fill="none" stroke="#222" stroke-width="1.3"/><rect x="832.2" y="56" width="7.6" height="5" fill="url(#lock)" stroke="#222" stroke-width="0.9"/><path d="M878.5 56.5V54.5Q878.5 52 881 52Q883.5 52 883.5 54.5" fill="none" stroke="#222" stroke-width="1.3"/><rect x="877.5" y="56" width="7.6" height="5" fill="#8ed36d" stroke="#222" stroke-width="0.9"/><rect x="935.3" y="53.3" width="11.8" height="7.5" fill="url(#bg2)" stroke="#222" stroke-width="1"/><circle cx="945.5" cy="51" r="5.2" fill="url(#mg)" stroke="#222" stroke-width="1"/><rect x="932.4" y="44.599999999999994" width="2.4" height="2.4" fill="#111"/><rect x="949.4" y="44.599999999999994" width="2.4" height="2.4" fill="#111"/><rect x="932.4" y="61.599999999999994" width="2.4" height="2.4" fill="#111"/><rect x="949.4" y="61.599999999999994" width="2.4" height="2.4" fill="#111"/><rect x="980.6" y="53.3" width="11.8" height="7.5" fill="url(#yg)" stroke="#222" stroke-width="1"/><circle cx="990.8" cy="51" r="5.2" fill="url(#mg)" stroke="#222" stroke-width="1"/><rect x="977.6999999999999" y="44.599999999999994" width="2.4" height="2.4" fill="#111"/><rect x="994.6999999999999" y="44.599999999999994" width="2.4" height="2.4" fill="#111"/><rect x="977.6999999999999" y="61.599999999999994" width="2.4" height="2.4" fill="#111"/><rect x="994.6999999999999" y="61.599999999999994" width="2.4" height="2.4" fill="#111"/><rect x="977.1999999999999" y="50.3" width="2.4" height="2.4" fill="#111"/><rect x="983.8" y="55.3" width="2.4" height="2.4" fill="#111"/><rect x="995.0" y="55.3" width="2.4" height="2.4" fill="#111"/><defs><linearGradient id="fsT" x1="0" x2="1"><stop offset="0" stop-color="#000"/><stop offset="0.5" stop-color="#111"/><stop offset="1" stop-color="#999"/></linearGradient><linearGradient id="fsL" x1="0" y1="0" x2="0" y2="1"><stop offset="0" stop-color="#000"/><stop offset="0.5" stop-color="#222"/><stop offset="1" stop-color="#bbb"/></linearGradient><linearGradient id="fsY" x1="0" y1="0" x2="0" y2="1"><stop offset="0" stop-color="#ffe840"/><stop offset="1" stop-color="#f09010"/></linearGradient></defs><g transform="translate(1040 44.5) scale(1.0)"><path d="M0.5 0.5H18.5L0.5 19Z" fill="#fff"/><rect x="0" y="0" width="19" height="2.4" fill="url(#fsT)"/><rect x="0" y="0" width="2.4" height="19" fill="url(#fsL)"/><path d="M0 19.3Q6.5 18.5 11 14.5Q13.5 12.2 19 9.8L19.6 8.2L14.5 3L10.5 7.5Q6 9 3.8 12.8Q1.5 16.5 0 19.3Z" fill="#000"/><path d="M4 15.5Q6.5 12 10 10.5" stroke="#777" stroke-width="0.8" fill="none"/><path d="M14.5 5.8L19.6 0.8V9.8Z" fill="url(#fsY)" stroke="#000" stroke-width="0.6"/></g><path d="M1085 45H1104V51H1102.5Q1101.5 48 1099 48H1097V61Q1097 62.5 1099.5 62.5V64H1089.5V62.5Q1092 62.5 1092 61V48H1090Q1087.5 48 1086.5 51H1085Z" fill="#111"/><path d="M1133.7 46.9H1144.4L1141 50.7H1130.3Z M1136.2 53.1H1146.9L1143.6 56.7H1133Z M1138.8 59.1H1149.2L1146.1 62.8H1135.4Z" fill="#000"/><rect x="1175.3" y="45" width="19" height="18.6" fill="#f0efea" stroke="#222" stroke-width="1.2"/><rect x="1176.5" y="46.3" width="16.6" height="2.8" fill="#9bbbe3"/><path d="M1175.3 49.8H1194.3" stroke="#222" stroke-width="0.8"/><rect x="1220.5" y="45" width="19" height="18.6" fill="#f0efea" stroke="#222" stroke-width="1.2"/><rect x="1221.7" y="46.3" width="16.6" height="2.8" fill="#9bbbe3"/><path d="M1220.5 49.8H1239.5" stroke="#222" stroke-width="0.8"/><path d="M1183 52.5L1179 56L1183 59.5M1187 52.5L1191 56L1187 59.5" fill="none" stroke="#222" stroke-width="1.2"/><text x="1230" y="61" font-size="11" font-family="Liberation Mono" text-anchor="middle" fill="#222">{}</text><rect x="1266" y="44.8" width="1.8" height="19" fill="#e03030"/><rect x="1269" y="45.8" width="6.5" height="4" fill="url(#bg2)" stroke="#333" stroke-width="0.8"/><rect x="1269" y="52.0" width="15.8" height="4" fill="url(#bg2)" stroke="#333" stroke-width="0.8"/><rect x="1269" y="58.3" width="12.5" height="4" fill="url(#bg2)" stroke="#333" stroke-width="0.8"/><path d="M1336.5 62.6H1331.6Q1330.4 62.6 1330.4 61.4V46.6Q1330.4 45.4 1331.6 45.4H1340.2L1344.9 50.1V59.3" fill="none" stroke="#2e3436" stroke-width="2.3"/><circle cx="1337.8" cy="56.3" r="3.5" fill="#2e3436"/><circle cx="1339.6" cy="54.2" r="1.9" fill="#f6f5f4"/><path d="M1337 58.5L1340.5 56.8L1344.6 63.8H1339.8Z" fill="#2e3436"/><path d="M1375.4 62L1380.3 57" stroke="#2e3436" stroke-width="3.3" stroke-linecap="round"/><path d="M1380 57.3L1389.3 48" stroke="#2e3436" stroke-width="1.3"/><path d="M1389 48.3L1390.9 46.4" stroke="#2e3436" stroke-width="2.8" stroke-linecap="round"/><circle cx="1377.3" cy="48.8" r="3.6" fill="#2e3436"/><circle cx="1375.4" cy="46.9" r="2.1" fill="#f6f5f4"/><path d="M1377.5 50L1379.5 48L1382.5 51.3L1381.7 53.5Z" fill="#2e3436"/><circle cx="1388.6" cy="59.6" r="3.6" fill="#2e3436"/><circle cx="1390.5" cy="61.5" r="2.1" fill="#f6f5f4"/><path d="M1384.3 56.3L1385.8 55.6L1388.5 58.3L1386.6 60.2Z" fill="#2e3436"/><path d="M1519.4 44.5L1523 48.1L1519.4 51.7L1515.8 48.1Z" fill="#c8c8ff" stroke="#2222ff" stroke-width="1.2"/><path d="M1531.8 56.9L1535.4 60.5L1531.8 64.1L1528.2 60.5Z" fill="#c8c8ff" stroke="#228822" stroke-width="1.2"/><path d="M1521.5 50.2L1527.8 56.4" stroke="#000" stroke-width="1.3"/><path d="M1529.5 58.2L1525 57.5L1528.7 53.8Z" fill="#000"/><rect x="18" y="96.5" width="18" height="17.5" fill="none" stroke="#222" stroke-width="2" stroke-dasharray="2.5 1.8"/><rect x="22" y="100.5" width="4" height="4" fill="#bbb"/><rect x="27.5" y="100.5" width="4.5" height="4" fill="#bbb"/><rect x="22" y="106" width="4" height="4" fill="#bbb"/><rect x="27.5" y="106" width="4.5" height="4" fill="#bbb"/><rect x="62.5" y="96.5" width="19" height="18.5" fill="none" stroke="#222" stroke-width="1.2" stroke-dasharray="1.6 1.2"/><path d="M65 101.5L74 99.5L79 103L70 105Z M65 104.5L74 102.5L79 106L70 108Z M65 107.5L74 105.5L79 109L70 111Z" fill="#fff" stroke="#333" stroke-width="0.8"/><rect x="107.5" y="96.5" width="19.5" height="18.5" fill="none" stroke="#e02020" stroke-width="1.3" stroke-dasharray="1.6 1.2"/><rect x="110.3" y="104.3" width="10.8" height="8.6" fill="url(#yg)" stroke="#222" stroke-width="1"/><circle cx="118.6" cy="102.3" r="4.5" fill="url(#mg)" stroke="#222" stroke-width="1"/><rect x="154.5" y="101" width="12" height="12.5" fill="none" stroke="#111" stroke-width="1.4" stroke-dasharray="1.8 1.6"/><rect x="165" y="97" width="5.5" height="5.5" fill="#000"/><path d="M230 112Q233 108 231.5 103.5Q229.5 98.5 224.5 98.5Q219.5 98.5 217.5 103Q216.8 105 217.2 107.5" fill="none" stroke="#2e3436" stroke-linecap="round" stroke-linejoin="round" stroke-width="2.3"/><path d="M214.5 107.5L220.5 107L217.5 111.5Z" fill="#2e3436" stroke="#2e3436" stroke-width="1.2" stroke-linejoin="round"/><path d="M264 112Q261 108 262.5 103.5Q264.5 98.5 269.5 98.5Q274.5 98.5 276.5 103Q277.2 105 276.8 107.5" fill="none" stroke="#2e3436" stroke-linecap="round" stroke-linejoin="round" stroke-width="2.3"/><path d="M279.5 107.5L273.5 107L276.5 111.5Z" fill="#2e3436" stroke="#2e3436" stroke-width="1.2" stroke-linejoin="round"/><path d="M306.5 105.5H323.5M310.5 101L306 105.5L310.5 110M319.5 101L324 105.5L319.5 110" fill="none" stroke="#2e3436" stroke-linecap="round" stroke-linejoin="round" stroke-width="2.3"/><path d="M360 96.5V114M355.5 100.5L360 96L364.5 100.5M355.5 110L360 114.5L364.5 110" fill="none" stroke="#2e3436" stroke-linecap="round" stroke-linejoin="round" stroke-width="2.3"/><rect x="413" y="96" width="19" height="3" fill="#dce6f2" stroke="#222" stroke-width="1"/><rect x="412.5" y="101.2" width="8.3" height="2.2" rx="1" fill="#222"/><rect x="412.5" y="104.8" width="8.3" height="2.2" rx="1" fill="#222"/><rect x="412.5" y="108.4" width="8.3" height="2.2" rx="1" fill="#222"/><rect x="412.5" y="112" width="8.3" height="2.2" rx="1" fill="#222"/><path d="M429 113.5V103" stroke="#222" stroke-width="1.5"/><path d="M426.5 104.5L429 101L431.5 104.5Z" fill="#222"/><rect x="458" y="96" width="7.5" height="2.2" rx="1" fill="#222"/><rect x="458" y="104.8" width="7.5" height="2.2" rx="1" fill="#222"/><rect x="458" y="108.4" width="7.5" height="2.2" rx="1" fill="#222"/><rect x="458" y="112" width="7.5" height="2.2" rx="1" fill="#222"/><rect x="458.3" y="100" width="18.7" height="3" fill="#dce6f2" stroke="#222" stroke-width="1"/><rect x="458" y="108.4" width="11" height="2.2" fill="#222"/><path d="M473.8 111L475.8 107.5" stroke="#222" stroke-width="1.5"/><path d="M472.8 107L477.5 106L476.5 110Z" fill="#222"/><rect x="514.5" y="96" width="7.5" height="2.2" rx="1" fill="#222"/><rect x="514.5" y="99.8" width="7.5" height="2.2" rx="1" fill="#222"/><rect x="514.5" y="103.2" width="7.5" height="2.2" rx="1" fill="#222"/><rect x="514.5" y="112" width="7.5" height="2.2" rx="1" fill="#222"/><rect x="503.5" y="103.5" width="7" height="2.2" fill="#222"/><rect x="502.8" y="108" width="18.7" height="3" fill="#f3d27a" stroke="#222" stroke-width="1"/><path d="M508 103.5L505 106" stroke="#222" stroke-width="1.5"/><path d="M503.5 104L504 107.5L507.5 107Z" fill="#222"/><rect x="559.5" y="96" width="8" height="2.2" rx="1" fill="#222"/><rect x="559.5" y="99.8" width="8" height="2.2" rx="1" fill="#222"/><rect x="559.5" y="103.5" width="8" height="2.2" rx="1" fill="#222"/><rect x="559.5" y="107.2" width="8" height="2.2" rx="1" fill="#222"/><rect x="548.5" y="111.5" width="19" height="3" fill="#f3d27a" stroke="#222" stroke-width="1"/><path d="M552.3 96V107" stroke="#222" stroke-width="1.5"/><path d="M549.8 106L552.3 109.5L554.8 106Z" fill="#222"/><defs><linearGradient id="lk2" x1="0" y1="0" x2="1" y2="1"><stop offset="0" stop-color="#fffbe8"/><stop offset="1" stop-color="#f1cf4a"/></linearGradient></defs><g transform="rotate(-13 1131.5 107.5)"><path d="M1127.2 101Q1128 96.2 1132 96.2Q1136 96.2 1136.3 101.5V103" fill="none" stroke="#111" stroke-width="1.4"/><rect x="1125" y="102.6" width="13" height="10" fill="url(#lk2)" stroke="#111" stroke-width="1.2"/><circle cx="1131.5" cy="106.4" r="1.2" fill="#111"/><rect x="1130.9" y="106.4" width="1.2" height="3.2" fill="#111"/></g><path d="M1425.6 96H1444.8V105H1441.8999999999999V98.8H1425.6Z" fill="#000"/><path d="M1425.6 102.2H1437.5V107H1435.8999999999999V103.8H1425.6Z" fill="#000"/><path d="M1428.6 111.2H1430.3999999999999M1432.1999999999998 111.2H1434.0M1435.8 111.2H1440.6" stroke="#000" stroke-width="1.5"/><path d="M1439.6 107.8L1444.8 111.2L1439.6 114.6Z" fill="#000"/><path d="M1470.6 97H1480.1Q1488.8 97 1488.8 104.8M1470.6 102.8H1478.1Q1482.8999999999999 102.8 1482.8999999999999 107" fill="none" stroke="#000" stroke-width="1.7"/><path d="M1473.6 111.2H1475.3999999999999M1477.1999999999998 111.2H1479.0M1480.8 111.2H1485.6" stroke="#000" stroke-width="1.5"/><path d="M1484.6 107.8L1489.8 111.2L1484.6 114.6Z" fill="#000"/><rect x="1515.8" y="98.8" width="16.3" height="6.6" fill="url(#tbg)"/><path d="M1515.8 96H1535.0V105H1532.1V98.8H1515.8Z" fill="#000"/><path d="M1515.8 102.2H1527.7V107H1526.1V103.8H1515.8Z" fill="#000"/><path d="M1518.8 111.2H1520.6M1522.3999999999999 111.2H1524.2M1526.0 111.2H1530.8" stroke="#000" stroke-width="1.5"/><path d="M1529.8 107.8L1535.0 111.2L1529.8 114.6Z" fill="#000"/><defs><linearGradient id="tbg" x1="0" y1="0" x2="1" y2="1"><stop offset="0" stop-color="#6f93c4"/><stop offset="1" stop-color="#dde8f5"/></linearGradient></defs><rect x="1561" y="96" width="19.2" height="9" fill="#000"/><path d="M1567.4 98L1570.0 100.5L1567.4 103L1564.8000000000002 100.5Z" fill="#fff"/><path d="M1573.8 98L1576.3999999999999 100.5L1573.8 103L1571.2 100.5Z" fill="#fff"/><path d="M1561 98.2L1563.2 100.5L1561 102.8ZM1580.2 98.2L1578 100.5L1580.2 102.8Z" fill="#fff"/><path d="M1564 111.2H1565.8M1567.6 111.2H1569.4M1571.2 111.2H1576" stroke="#000" stroke-width="1.5"/><path d="M1575 107.8L1580.2 111.2L1575 114.6Z" fill="#000"/><path d="M14 141.5V157.5L17.5 154L20.5 160.5L23 159.5L20 153H25Z" fill="#000" stroke="#fff" stroke-width="0.5"/><path d="M12.5 182.5L25 180.5M12.5 182.5L10 196" stroke="#555" stroke-width="0.8"/><rect x="10.5" y="180.5" width="4.5" height="4.5" fill="#66f" stroke="#22c" stroke-width="0.8"/><rect x="24" y="178.5" width="3" height="3" fill="#bbf" stroke="#33d" stroke-width="0.7"/><rect x="8.5" y="195" width="3" height="3" fill="#bbf" stroke="#33d" stroke-width="0.7"/><path d="M14.5 184.5L27 193L23.5 194.5L21 198Z" fill="#000"/><rect x="11.3" y="221" width="16" height="16" rx="1" fill="url(#bg1)" stroke="#333" stroke-width="1.2"/><circle cx="19.3" cy="269" r="8" fill="url(#rg)" stroke="#333" stroke-width="1.2"/><defs><linearGradient id="stg" x1="0" y1="0" x2="1" y2="1"><stop offset="0" stop-color="#fffbe0"/><stop offset="1" stop-color="#f2dc60"/></linearGradient><linearGradient id="bx1" x1="0" y1="0" x2="1" y2="1"><stop offset="0" stop-color="#8c8cd0"/><stop offset="1" stop-color="#c8c8f0"/></linearGradient></defs><path d="M10.5 305L16.5 299.5L22.5 302.5L20.8 310.5L13 311Z" fill="url(#stg)" stroke="#333" stroke-width="1"/><path d="M21.80 302.20L23.74 307.13L29.03 307.45L24.94 310.82L26.27 315.95L21.80 313.10L17.33 315.95L18.66 310.82L14.57 307.45L19.86 307.13Z" fill="url(#stg)" stroke="#333" stroke-width="1"/><path d="M19.5 337.8L28 343.2V353.2L19.2 357L11.2 352.3L11.5 342.5Z" fill="url(#bx1)" stroke="#444" stroke-width="1"/><path d="M20 348.8L28 343.2V353.2Z" fill="#e4e4fa"/><path d="M12 352L20 348.8L27.8 353.2L19.2 356.5Z" fill="#3a3a92"/><path d="M19.5 337.8L28 343.2V353.2L19.2 357L11.2 352.3L11.5 342.5Z" fill="none" stroke="#444" stroke-width="1"/><path d="M18.2 388.5Q16.5 387.5 17 385.5Q18 383.5 20 384Q22.5 385 22 388Q21 391 17.5 390.5Q13.5 389.5 14 385Q15 380.5 19.5 380.5Q25 381 25.5 386.5Q25.5 393 19 393.8Q12.5 394 11.2 388Q10.5 381 16 378.2Q21 376.5 25 379.5Q28.5 383 28.2 388Q28 392 26.5 394.5" fill="none" stroke="#333" stroke-width="1.2"/><path d="M11.2 418H20.5Q15 424 13 433" stroke="#222" stroke-width="1.2" fill="none"/><rect x="10" y="432.2" width="3.5" height="3.3" fill="#fff" stroke="#222" stroke-width="1"/><path d="M13.5 434H18.5" stroke="#222" stroke-width="1.1"/><path d="M20.5 424.5L25.8 416.3L29.6 419L24.2 427Z" fill="#7ab8e0" stroke="#333" stroke-width="0.8"/><path d="M20.5 424.5L24.2 427L19.3 433.5L18 432.5Z" fill="#f5c842" stroke="#333" stroke-width="0.8"/><path d="M10.5 457Q12 455 13.5 456.5Q14.5 458.5 11 462.5H14Q11 466 14 470Q17 474 21.5 471.5" stroke="#222" stroke-width="1.1" fill="none"/><path d="M19 472L19.3 465L25.5 455.8L29.3 458.4L23.2 467.8Z" fill="#f5c832" stroke="#333" stroke-width="0.8"/><path d="M19 472L19.3 465L23.2 467.8Z" fill="#f8f0d8" stroke="#333" stroke-width="0.6"/><path d="M10.5 497Q13 492.5 16.5 494.5Q14 500 15 506Q17 511 22 511.5Q26 511.5 29 509.5Q25 514.5 19 513.5Q12 511.5 12 503Q12 499 10.5 497Z" fill="#111"/><path d="M20.5 508.5L19.5 500.5L24 494.5L28.5 497.5L26.2 505Z" fill="#f2c230" stroke="#222" stroke-width="0.8"/><path d="M24 494.5L26.3 491.3L30.3 494L28.5 497.5Z" fill="#4a78c8"/><path d="M23.6 495L28.7 497.8L28.2 499L23 496Z" fill="#c83030"/><path d="M10.5 551.5L17.5 534.5H20.5L27.5 551.5H23.5L22 547.5H16L14.5 551.5ZM17 544.5H21L19 539Z" fill="#111"/><path d="M26 536H30M28 536V550M26 550H30" stroke="#333" stroke-width="0.8"/><rect x="11" y="575.5" width="16.5" height="16" fill="url(#gg)"/><path d="M14.5 579L24 588" stroke="#333" stroke-width="1"/><rect x="12.5" y="577.5" width="3.5" height="3.5" fill="#fff" stroke="#333" stroke-width="0.8"/><rect x="22.5" y="586" width="3.5" height="3.5" fill="#fff" stroke="#333" stroke-width="0.8"/><defs><linearGradient id="msh" x1="0" y1="0" x2="1" y2="1"><stop offset="0" stop-color="#2f8f6f"/><stop offset="1" stop-color="#a8dcc0"/></linearGradient><linearGradient id="bk" x1="0" y1="0" x2="1" y2="1"><stop offset="0" stop-color="#d8ecf8"/><stop offset="1" stop-color="#3a7ab8"/></linearGradient></defs><path d="M12.8 617.5L24.6 615.2L26 628.2L13.6 629.8Z" fill="url(#msh)" stroke="#2a5a4a" stroke-width="0.6"/><circle cx="12.6" cy="616.3" r="1.9" fill="#fff" stroke="#222" stroke-width="0.9"/><circle cx="25.4" cy="616.3" r="1.9" fill="#fff" stroke="#222" stroke-width="0.9"/><circle cx="25.4" cy="629.2" r="1.9" fill="#fff" stroke="#222" stroke-width="0.9"/><circle cx="12.6" cy="629.2" r="1.9" fill="#fff" stroke="#222" stroke-width="0.9"/><path d="M14.6 667.4L22.8 659.2" stroke="#333" stroke-width="3.4" stroke-linecap="round"/><path d="M14.6 667.4L22.8 659.2" stroke="#a8cde8" stroke-width="1.6" stroke-linecap="round"/><path d="M21.3 657.8L25 654Q27 652.2 28.8 654Q30.4 656 28.5 658L24.7 661.7Z" fill="#111"/><circle cx="14" cy="670.2" r="1.6" fill="#3a7ac8"/><ellipse cx="17.5" cy="707.8" rx="7.8" ry="2.1" fill="#98d8a0" stroke="#3a8a4a" stroke-width="0.8"/><path d="M17.2 693.5L25.8 690.8L29.2 700.2L20.8 703.8Z" fill="url(#bk)" stroke="#222" stroke-width="1"/><ellipse cx="19" cy="698.6" rx="2.3" ry="5.2" transform="rotate(-20 19 698.6)" fill="#70c478" stroke="#222" stroke-width="0.9"/><path d="M16.8 701.5Q14.5 704.5 14.2 707.5" stroke="#70c478" stroke-width="2.2" fill="none"/><path d="M17.5 692Q18.8 689 21 691.5" stroke="#222" stroke-width="0.9" fill="none"/><defs><linearGradient id="twk" x1="0" y1="0" x2="0" y2="1"><stop offset="0" stop-color="#fff"/><stop offset="0.55" stop-color="#9a9a9a"/><stop offset="1" stop-color="#d4d4d4"/></linearGradient></defs><path d="M10 745Q15 744.5 17 738.5Q19.5 732.5 23.5 732.8Q27.2 733.5 26.8 737Q26 739.5 23.5 738Q21.2 737.2 21.2 740.2Q21.5 744.5 28 745.2V751.5H10Z" fill="url(#twk)"/><path d="M10 745Q15 744.5 17 738.5Q19.5 732.5 23.5 732.8Q27.2 733.5 26.8 737Q26 739.5 23.5 738Q21.2 737.2 21.2 740.2Q21.5 744.5 28 745.2" fill="none" stroke="#333" stroke-width="1.1"/><defs><linearGradient id="spg" x1="0" y1="0" x2="1" y2="0"><stop offset="0" stop-color="#3a9a2a"/><stop offset="0.6" stop-color="#8ad04a"/><stop offset="1" stop-color="#4a9a2a"/></linearGradient><linearGradient id="ers" x1="0" y1="0" x2="0" y2="1"><stop offset="0" stop-color="#f2a080"/><stop offset="1" stop-color="#f8d0c0"/></linearGradient><linearGradient id="msr" x1="0" y1="0" x2="1" y2="1"><stop offset="0" stop-color="#f8d8c8"/><stop offset="1" stop-color="#f0a888"/></linearGradient></defs><path d="M19.2 779Q19.5 776.5 22 776.2L26.5 775.8Q28.8 776 28.8 778.5L29 788.5Q27 789.8 23.5 789.6Q20.5 789.3 19.8 788.5Z" fill="url(#spg)" stroke="#333" stroke-width="0.9"/><path d="M21.5 776.2Q22 773 24 773Q26 773 26.3 775.8" fill="#eee" stroke="#333" stroke-width="0.8"/><path d="M20.5 777.3H27.5" stroke="#c8a020" stroke-width="1.2"/><circle cx="11.5" cy="773" r="0.9" fill="#222"/><circle cx="13" cy="775.8" r="0.9" fill="#222"/><circle cx="11.2" cy="778.2" r="0.9" fill="#222"/><circle cx="14.2" cy="778.8" r="0.9" fill="#222"/><circle cx="13.2" cy="780.8" r="0.9" fill="#222"/><circle cx="16" cy="776.5" r="0.9" fill="#222"/><g transform="rotate(35 20 818)"><rect x="16.2" y="809.5" width="8" height="17" fill="url(#ers)" stroke="#222" stroke-width="1"/><rect x="16.2" y="819" width="8" height="7.5" fill="#2a3ae8" stroke="#222" stroke-width="1"/></g><path d="M10 827.6H15.5M22.5 827.6H29" stroke="#444" stroke-width="1.2"/><path d="M17.8 854V858M21.5 851H25.5V861M17.8 859H13V861" fill="none" stroke="#444" stroke-width="0.9"/><rect x="14.2" y="848" width="7" height="6" fill="#a8c8ec" stroke="#444" stroke-width="0.9"/><rect x="16.8" y="857" width="6.5" height="3.8" fill="#f0d040" stroke="#444" stroke-width="0.7"/><rect x="10" y="861" width="6.3" height="6" fill="#a8c8ec" stroke="#444" stroke-width="0.9"/><rect x="22.8" y="861" width="6.3" height="6" fill="#a8c8ec" stroke="#444" stroke-width="0.9"/><g transform="rotate(-32 19 899)"><rect x="15" y="889.5" width="8" height="19" fill="url(#msr)" stroke="#333" stroke-width="1"/><path d="M15.5 892.5H18M15.5 895H17M15.5 897.5H18.5M15.5 900H17M15.5 902.5H18M15.5 905H17" stroke="#555" stroke-width="0.7"/></g><path d="M51.5 145.5V142Q51.5 137 56 137Q60.5 137 60.5 142V145.5" fill="none" stroke="#222" stroke-width="1.6"/><rect x="49.5" y="145" width="13" height="9.5" rx="1" fill="url(#lock)" stroke="#222" stroke-width="1"/><rect x="55.2" y="147.5" width="1.6" height="4" fill="#222"/><path d="M422.8 157H433.6L428.2 162.2Z" fill="#878c8d"/><path d="M63.2 454.6L68.9 460.2L63.2 465.8Z" fill="#878c8d"/><path d="M55 460.2H64" stroke="#878c8d" stroke-width="1.3"/><g transform="translate(592.5 292.8) rotate(90)"><path d="M-8.0 0L-3.4000000000000004 -4.9V-2.4H3.4000000000000004V-4.9L8.0 0L3.4000000000000004 4.9V2.4H-3.4000000000000004V4.9Z" fill="#111"/></g><g transform="translate(592.5 740.5) rotate(90)"><path d="M-8.0 0L-3.4000000000000004 -4.9V-2.4H3.4000000000000004V-4.9L8.0 0L3.4000000000000004 4.9V2.4H-3.4000000000000004V4.9Z" fill="#111"/></g><g transform="translate(294.2 515.7) rotate(0)"><path d="M-7.2 0L-3.0 -4.6V-2.3H3.0V-4.6L7.2 0L3.0 4.6V2.3H-3.0V4.6Z" fill="#333"/></g><g transform="translate(891.1 515.7) rotate(0)"><path d="M-7.2 0L-3.0 -4.6V-2.3H3.0V-4.6L7.2 0L3.0 4.6V2.3H-3.0V4.6Z" fill="#3d3d3d"/></g><g transform="translate(297 295) rotate(0)"><path d="M-5.8 -5.8H1L-0.9 -3.9L3.9 0.9L5.8 -1V5.8H-1L0.9 3.9L-3.9 -0.9L-5.8 1Z" fill="#222"/></g><g transform="translate(888 295) rotate(90)"><path d="M-5.8 -5.8H1L-0.9 -3.9L3.9 0.9L5.8 -1V5.8H-1L0.9 3.9L-3.9 -0.9L-5.8 1Z" fill="#4a4a4a"/></g><g transform="translate(297 738) rotate(90)"><path d="M-5.8 -5.8H1L-0.9 -3.9L3.9 0.9L5.8 -1V5.8H-1L0.9 3.9L-3.9 -0.9L-5.8 1Z" fill="#222"/></g><g transform="translate(888.5 738) rotate(0)"><path d="M-5.8 -5.8H1L-0.9 -3.9L3.9 0.9L5.8 -1V5.8H-1L0.9 3.9L-3.9 -0.9L-5.8 1Z" fill="#4a4a4a"/></g><g transform="translate(1198 148) scale(0.95)"><path d="M0.5 0.5H18.5L0.5 19Z" fill="#fff"/><rect x="0" y="0" width="19" height="2.4" fill="url(#fsT)"/><rect x="0" y="0" width="2.4" height="19" fill="url(#fsL)"/><path d="M0 19.3Q6.5 18.5 11 14.5Q13.5 12.2 19 9.8L19.6 8.2L14.5 3L10.5 7.5Q6 9 3.8 12.8Q1.5 16.5 0 19.3Z" fill="#000"/><path d="M4 15.5Q6.5 12 10 10.5" stroke="#777" stroke-width="0.8" fill="none"/><path d="M14.5 5.8L19.6 0.8V9.8Z" fill="url(#fsY)" stroke="#000" stroke-width="0.6"/></g><path d="M1128 149H1136L1141 154V169H1128Z" fill="url(#pg)" stroke="#222" stroke-width="1"/><path d="M1136 149V154H1141" fill="#fff" stroke="#222" stroke-width="0.8"/><path d="M1136 159.5H1145" stroke="#111" stroke-width="1.4"/><path d="M1144.5 156.5L1148 159.5L1144.5 162.5Z" fill="#111"/><rect x="1387.5" y="148.8" width="1.8" height="19" fill="#e03030"/><rect x="1390.5" y="149.8" width="6.5" height="4" fill="url(#bg2)" stroke="#333" stroke-width="0.8"/><rect x="1390.5" y="156.0" width="15.8" height="4" fill="url(#bg2)" stroke="#333" stroke-width="0.8"/><rect x="1390.5" y="162.3" width="12.5" height="4" fill="url(#bg2)" stroke="#333" stroke-width="0.8"/></svg>
</body></html>
